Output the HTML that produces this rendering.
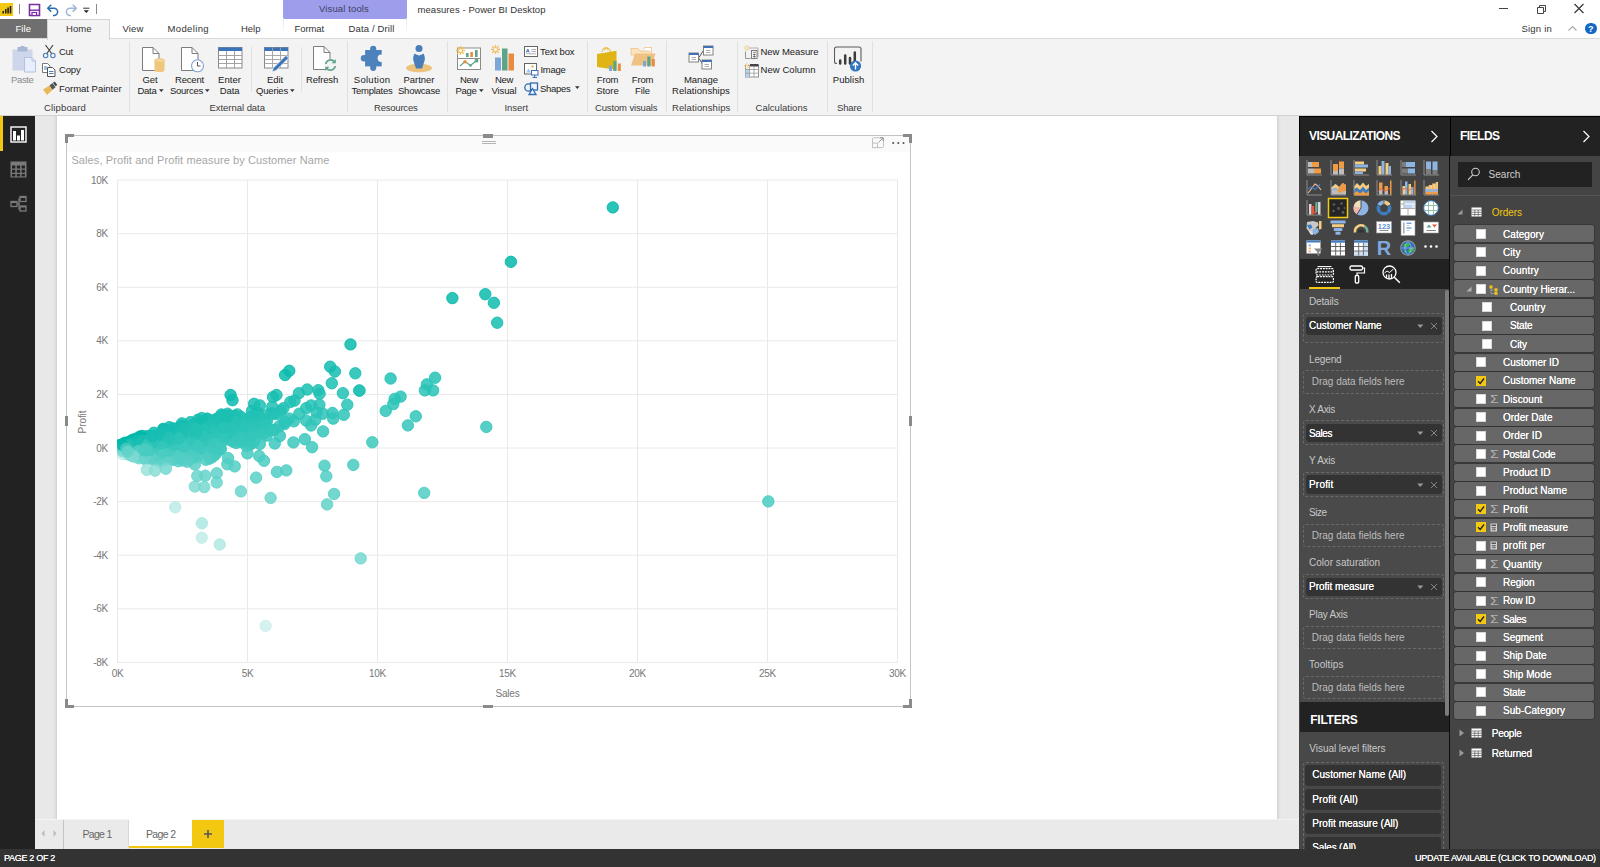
<!DOCTYPE html>
<html><head><meta charset="utf-8"><title>measures - Power BI Desktop</title>
<style>
html,body{margin:0;padding:0;}
body{width:1600px;height:867px;overflow:hidden;position:relative;background:#fff;font-family:"Liberation Sans",sans-serif;}
.t{position:absolute;white-space:nowrap;}
.b{position:absolute;box-sizing:border-box;}
</style></head>
<body>
<!-- chrome -->
<div class="b" style="left:0px;top:0px;width:1600px;height:39px;background:#ffffff;"></div>
<div class="b" style="left:0px;top:38px;width:1600px;height:78px;background:#f3f3f3;border-top:1px solid #dadada;border-bottom:1px solid #d2d2d2;"></div>
<div class="b" style="left:0px;top:3px;width:13px;height:13px;background:#f2c811;"></div>
<svg class="b" style="left:0px;top:3px;" width="13" height="13" viewBox="0 0 13 13"><rect x="2.5" y="8" width="1.5" height="2.5" fill="#222"/><rect x="5" y="6" width="1.5" height="4.5" fill="#222"/><rect x="7.3" y="4.5" width="1.6" height="6" fill="#222"/><rect x="9.7" y="3" width="1.6" height="7.5" fill="#222"/></svg>
<div class="b" style="left:19px;top:4px;width:1px;height:9.5px;background:#8a8a8a;"></div>
<svg class="b" style="left:28px;top:3px;" width="14" height="14" viewBox="0 0 14 14"><path d="M1.5 1.5h10v11h-10z" fill="none" stroke="#7a2da0" stroke-width="1.6"/><path d="M1.5 7.2h10" stroke="#7a2da0" stroke-width="1.4"/><rect x="4" y="9.5" width="4.6" height="3" fill="#fff" stroke="#7a2da0" stroke-width="1.2"/></svg>
<svg class="b" style="left:46px;top:3px;" width="14" height="14" viewBox="0 0 14 14"><path d="M2 5.2h6a3.6 3.6 0 0 1 0 7.2h-1" fill="none" stroke="#2b6cb3" stroke-width="1.5"/><path d="M5.2 1.8L1.8 5.2l3.4 3.4" fill="none" stroke="#2b6cb3" stroke-width="1.5"/></svg>
<svg class="b" style="left:64px;top:3px;" width="14" height="14" viewBox="0 0 14 14"><path d="M12 5.2h-6a3.6 3.6 0 0 0 0 7.2h1" fill="none" stroke="#9db5d6" stroke-width="1.5"/><path d="M8.8 1.8l3.4 3.4-3.4 3.4" fill="none" stroke="#9db5d6" stroke-width="1.5"/></svg>
<svg class="b" style="left:82px;top:6px;" width="9" height="9" viewBox="0 0 9 9"><path d="M1.2 2.2h6.2" stroke="#333" stroke-width="1"/><path d="M1.7 4.2h5.2l-2.6 2.8z" fill="#222"/></svg>
<div class="b" style="left:96px;top:4px;width:1px;height:9.5px;background:#8a8a8a;"></div>
<div class="b" style="left:0px;top:19px;width:47px;height:19px;background:#6f6f6f;"></div>
<div class="t" style="left:15.5px;top:22.0px;font-size:9.5px;line-height:13.5px;color:#fff;letter-spacing:0.05px;">File</div>
<div class="b" style="left:46.5px;top:19px;width:63.5px;height:21px;background:#f3f3f3;border:1px solid #d4d4d4;border-bottom:none;box-sizing:border-box;"></div>
<div class="t" style="left:66.0px;top:22.0px;font-size:9.5px;line-height:13.5px;color:#333;letter-spacing:0.04px;">Home</div>
<div class="t" style="left:122.5px;top:22.0px;font-size:9.5px;line-height:13.5px;color:#333;letter-spacing:0.15px;">View</div>
<div class="t" style="left:167.5px;top:22.0px;font-size:9.5px;line-height:13.5px;color:#333;letter-spacing:0.37px;">Modeling</div>
<div class="t" style="left:241.0px;top:22.0px;font-size:9.5px;line-height:13.5px;color:#333;letter-spacing:-0.01px;">Help</div>
<div class="b" style="left:283px;top:0px;width:123.5px;height:18.5px;background:#9d9deb;"></div>
<div class="b" style="left:283px;top:18px;width:1px;height:16px;background:linear-gradient(#e2e2e2,#fff);"></div>
<div class="b" style="left:406px;top:18px;width:1px;height:16px;background:linear-gradient(#e2e2e2,#fff);"></div>
<div class="t" style="left:319.0px;top:2.0px;font-size:9.5px;line-height:13.5px;color:#3e3e63;letter-spacing:0.13px;">Visual tools</div>
<div class="t" style="left:294.5px;top:22.0px;font-size:9.5px;line-height:13.5px;color:#333;letter-spacing:-0.10px;">Format</div>
<div class="t" style="left:348.5px;top:22.0px;font-size:9.5px;line-height:13.5px;color:#333;letter-spacing:0.14px;">Data / Drill</div>
<div class="t" style="left:417.5px;top:3.0px;font-size:9.5px;line-height:13.5px;color:#333;letter-spacing:0.07px;">measures - Power BI Desktop</div>
<svg class="b" style="left:1497px;top:2px;" width="100" height="14" viewBox="0 0 100 14"><path d="M2 6.5h9" stroke="#444" stroke-width="1"/><path d="M40.5 5.5h6v6h-6z M42.5 5.5v-2h6v6h-2" fill="none" stroke="#444" stroke-width="1"/><path d="M77.5 2l9 9m0-9l-9 9" stroke="#333" stroke-width="1.1"/></svg>
<div class="t" style="left:1521.5px;top:22.0px;font-size:9.5px;line-height:13.5px;color:#333;letter-spacing:0.21px;">Sign in</div>
<svg class="b" style="left:1567px;top:24px;" width="12" height="9" viewBox="0 0 12 9"><path d="M1.5 6.5l4-4 4 4" fill="none" stroke="#aaa" stroke-width="1.1"/></svg>
<div class="b" style="left:1585px;top:22.5px;width:11.5px;height:11.5px;background:#1268c4;border-radius:50%;"></div>
<div class="t" style="left:1588.0px;top:23.0px;font-size:9px;line-height:13px;color:#fff;font-weight:bold;">?</div>
<!-- ribbon -->
<svg class="b" style="left:12px;top:46px;" width="26" height="28" viewBox="0 0 26 28"><rect x="0.5" y="3.5" width="20" height="21" fill="#cdd6ea"/><rect x="5.5" y="1" width="10" height="4.5" fill="#a9b7d6"/><rect x="8.5" y="0" width="4" height="2.5" fill="#a9b7d6"/><path d="M12.5 11.5h7.5l3.5 3.5v11h-11z" fill="#e8eefb" stroke="#b4c3e0"/><path d="M20 11.5v3.5h3.5" fill="none" stroke="#b4c3e0"/></svg>
<div class="t" style="left:11.0px;top:73.0px;font-size:9.5px;line-height:13.5px;color:#8a8a8a;letter-spacing:-0.36px;">Paste</div>
<svg class="b" style="left:42px;top:44px;" width="15" height="15" viewBox="0 0 15 15"><path d="M3.5 1l6.5 9M11 1l-6.5 9" stroke="#444" stroke-width="1.2" fill="none"/><circle cx="3.6" cy="11.5" r="2.2" fill="none" stroke="#4a7ebb" stroke-width="1.1"/><circle cx="10.9" cy="11.5" r="2.2" fill="none" stroke="#4a7ebb" stroke-width="1.1"/></svg>
<div class="t" style="left:59.0px;top:45.0px;font-size:9.5px;line-height:13.5px;color:#222;letter-spacing:-0.26px;">Cut</div>
<svg class="b" style="left:42px;top:63px;" width="15" height="15" viewBox="0 0 15 15"><path d="M0.5 0.5h5l2.5 2.5v6.5h-7.5z" fill="#fff" stroke="#777"/><path d="M2 4h3M2 6h3" stroke="#4a7ebb"/><path d="M5.5 4.5h5l2.5 2.5v6.500h-7.5z" fill="#fff" stroke="#555"/><path d="M7 8.5h4.500M7 10.500h4.500" stroke="#4a7ebb"/></svg>
<div class="t" style="left:59.0px;top:63.0px;font-size:9.5px;line-height:13.5px;color:#222;letter-spacing:-0.17px;">Copy</div>
<svg class="b" style="left:42px;top:81px;" width="16" height="15" viewBox="0 0 16 15"><path d="M1 8.500l6.500-4 3 4.500-5.500 5z" fill="#e8b85a"/><path d="M7.500 4.500l3-2.500 3 4.200-3 2.600z" fill="#555"/><path d="M11 1.800l1.800-1.300 2.500 3.500-1.800 1.300z" fill="#444"/></svg>
<div class="t" style="left:59.0px;top:82.0px;font-size:9.5px;line-height:13.5px;color:#222;letter-spacing:-0.02px;">Format Painter</div>
<div class="t" style="left:44.0px;top:101.0px;font-size:9.5px;line-height:13.5px;color:#3a3a3a;letter-spacing:0.15px;">Clipboard</div>
<div class="b" style="left:129px;top:41px;width:1px;height:71px;background:#e0e0e0;"></div>
<svg class="b" style="left:141.5px;top:46.5px;" width="24" height="26" viewBox="0 0 24 26"><path d="M0.5 0.5h10.5l6 6v17h-16.5z" fill="#fff" stroke="#7d7d7d"/><path d="M11 0.5v6h6" fill="none" stroke="#7d7d7d"/><path d="M12.500 13.500v9.500a5 2 0 0 0 10 0v-9.500z" fill="#eec67c"/><ellipse cx="17.500" cy="13.500" rx="5" ry="2" fill="#f3d59a" stroke="#e9bd68" stroke-width="0.6"/></svg>
<div class="t" style="left:142.5px;top:73.0px;font-size:9.5px;line-height:13.5px;color:#222;letter-spacing:-0.10px;">Get</div><div class="t" style="left:137.5px;top:84.0px;font-size:9.5px;line-height:13.5px;color:#222;letter-spacing:-0.27px;">Data</div><svg class="b" style="left:158.5px;top:88.6px;" width="5" height="4" viewBox="0 0 5 4"><path d="M0 0.3h4.6l-2.3 2.6z" fill="#333"/></svg>
<svg class="b" style="left:181px;top:46.5px;" width="24" height="26" viewBox="0 0 24 26"><path d="M0.5 0.5h10.5l6 6v17h-16.5z" fill="#fff" stroke="#7d7d7d"/><path d="M11 0.5v6h6" fill="none" stroke="#7d7d7d"/><circle cx="16.500" cy="18.800" r="6" fill="#fff" stroke="#7fa3d6" stroke-width="1.1"/><path d="M16.500 15v4h3" fill="none" stroke="#555" stroke-width="1"/></svg>
<div class="t" style="left:175.0px;top:73.0px;font-size:9.5px;line-height:13.5px;color:#222;letter-spacing:-0.18px;">Recent</div><div class="t" style="left:170.0px;top:84.0px;font-size:9.5px;line-height:13.5px;color:#222;letter-spacing:-0.26px;">Sources</div><svg class="b" style="left:205.0px;top:88.6px;" width="5" height="4" viewBox="0 0 5 4"><path d="M0 0.3h4.6l-2.3 2.6z" fill="#333"/></svg>
<svg class="b" style="left:218px;top:47px;" width="25" height="22" viewBox="0 0 25 22"><rect x="0.5" y="0.5" width="23.500" height="20.500" fill="#fff" stroke="#8a8a8a"/><rect x="0.5" y="0.5" width="23.500" height="3.500" fill="#3b73b9"/><path d="M0.5 8.500h23.500M0.5 12.500h23.500M0.5 16.500h23.500M8.500 4v17M16.500 4v17" stroke="#9a9a9a" stroke-width="0.9"/></svg>
<div class="t" style="left:218.0px;top:73.0px;font-size:9.5px;line-height:13.5px;color:#222;letter-spacing:0.06px;">Enter</div><div class="t" style="left:219.8px;top:84.0px;font-size:9.5px;line-height:13.5px;color:#222;letter-spacing:-0.14px;">Data</div>
<div class="b" style="left:251px;top:47px;width:1px;height:45px;background:#e0e0e0;"></div>
<svg class="b" style="left:264px;top:47px;" width="26" height="26" viewBox="0 0 26 26"><rect x="0.5" y="0.5" width="23.500" height="20.500" fill="#fff" stroke="#8a8a8a"/><rect x="0.5" y="0.5" width="23.500" height="3.500" fill="#3b73b9"/><path d="M0.5 8.500h23.500M0.5 12.500h23.500M0.5 16.500h23.500M8.500 0.500v20.500M16.500 0.500v20.500" stroke="#a0a0a0" stroke-width="0.9"/><path d="M8.200 24.800l1.200-3.800 12.500-12.500 2.600 2.600-12.500 12.500z" fill="#3b73b9" stroke="#f3f3f3" stroke-width="0.7"/></svg>
<div class="t" style="left:267.0px;top:73.0px;font-size:9.5px;line-height:13.5px;color:#222;letter-spacing:-0.09px;">Edit</div><div class="t" style="left:256.0px;top:84.0px;font-size:9.5px;line-height:13.5px;color:#222;letter-spacing:-0.18px;">Queries</div><svg class="b" style="left:290.0px;top:88.6px;" width="5" height="4" viewBox="0 0 5 4"><path d="M0 0.3h4.6l-2.3 2.6z" fill="#333"/></svg>
<div class="b" style="left:301px;top:47px;width:1px;height:45px;background:#e0e0e0;"></div>
<svg class="b" style="left:313px;top:46px;" width="25" height="26" viewBox="0 0 25 26"><path d="M0.5 0.5h10.5l6 6v17h-16.5z" fill="#fff" stroke="#7d7d7d"/><path d="M11 0.5v6h6" fill="none" stroke="#7d7d7d"/><circle cx="17.500" cy="19" r="6.200" fill="#f3f3f3"/><path d="M12.800 18a4.800 4.800 0 0 1 8.600-2.200" fill="none" stroke="#5fa388" stroke-width="1.700"/><path d="M22.200 20a4.800 4.800 0 0 1-8.600 2.200" fill="none" stroke="#5fa388" stroke-width="1.700"/><path d="M22.800 13v4.200h-4.200z" fill="#5fa388"/><path d="M12.200 25v-4.200h4.200z" fill="#5fa388"/></svg>
<div class="t" style="left:306.0px;top:73.0px;font-size:9.5px;line-height:13.5px;color:#222;letter-spacing:-0.18px;">Refresh</div>
<div class="t" style="left:209.5px;top:101.0px;font-size:9.5px;line-height:13.5px;color:#3a3a3a;letter-spacing:-0.04px;">External data</div>
<div class="b" style="left:346.5px;top:41px;width:1px;height:71px;background:#e0e0e0;"></div>
<svg class="b" style="left:360px;top:45px;" width="24" height="27" viewBox="0 0 24 27"><g fill="#4d82bc"><rect x="5.100" y="5" width="16.600" height="16.400"/><circle cx="13.200" cy="3.900" r="3.100"/><circle cx="13.200" cy="22.800" r="3.100"/><circle cx="4" cy="13.300" r="3.200"/></g><circle cx="21.300" cy="13.300" r="3.700" fill="#f3f3f3"/></svg>
<div class="t" style="left:353.8px;top:73.0px;font-size:9.5px;line-height:13.5px;color:#222;letter-spacing:0.27px;">Solution</div><div class="t" style="left:351.5px;top:84.0px;font-size:9.5px;line-height:13.5px;color:#222;letter-spacing:-0.26px;">Templates</div>
<svg class="b" style="left:405px;top:44px;" width="29" height="29" viewBox="0 0 29 29"><ellipse cx="14" cy="24" rx="13" ry="4.300" fill="#edc27a"/><circle cx="14" cy="4.500" r="3.500" fill="#4a7ebb"/><path d="M9.500 9.500q4.500 3.500 9 0q2.500 5 0.500 9l-2 6h-6l-2-6q-2-4 0.500-9z" fill="#4a7ebb"/><path d="M12.300 9l1.700 3 1.700-3z" fill="#f3f3f3"/></svg>
<div class="t" style="left:403.5px;top:73.0px;font-size:9.5px;line-height:13.5px;color:#222;letter-spacing:-0.02px;">Partner</div><div class="t" style="left:398.0px;top:84.0px;font-size:9.5px;line-height:13.5px;color:#222;letter-spacing:-0.23px;">Showcase</div>
<div class="t" style="left:374.0px;top:101.0px;font-size:9.5px;line-height:13.5px;color:#3a3a3a;letter-spacing:-0.21px;">Resources</div>
<div class="b" style="left:447px;top:41px;width:1px;height:71px;background:#e0e0e0;"></div>
<svg class="b" style="left:456px;top:45.5px;" width="26" height="25" viewBox="0 0 26 25"><rect x="1.500" y="2" width="23" height="21.500" fill="#fff" stroke="#8c8c8c"/><path d="M1.500 12.500h23" stroke="#8c8c8c"/><rect x="10" y="7" width="2.600" height="4" fill="#5fa388"/><rect x="14.300" y="6" width="2.600" height="5" fill="#e98b3f"/><rect x="19" y="4" width="2.600" height="7" fill="#5fa388"/><path d="M4 20l5-4.500 5.500 4 6-5" fill="none" stroke="#5fa388" stroke-width="1.100"/><circle cx="9" cy="15.700" r="1.700" fill="#e98b3f"/><circle cx="20.500" cy="14.700" r="1.900" fill="#5fa388"/><circle cx="14.500" cy="19.500" r="1.300" fill="#5fa388"/><g stroke="#efc162" stroke-width="1.350"><path d="M4.500 0v9M0 4.500h9M1.300 1.300l6.400 6.400M7.700 1.300l-6.400 6.400"/></g><circle cx="4.500" cy="4.500" r="1.500" fill="#fbfbfb"/></svg>
<div class="t" style="left:460.0px;top:73.0px;font-size:9.5px;line-height:13.5px;color:#222;letter-spacing:-0.33px;">New</div><div class="t" style="left:455.5px;top:84.0px;font-size:9.5px;line-height:13.5px;color:#222;letter-spacing:-0.30px;">Page</div><svg class="b" style="left:478.5px;top:88.6px;" width="5" height="4" viewBox="0 0 5 4"><path d="M0 0.3h4.6l-2.3 2.6z" fill="#333"/></svg>
<svg class="b" style="left:491px;top:44.5px;" width="25" height="26" viewBox="0 0 25 26"><rect x="4" y="12.500" width="6" height="13" fill="#7ea6d8"/><rect x="11" y="3.500" width="5.500" height="22" fill="#5fa388"/><rect x="17.500" y="8.500" width="5.500" height="17" fill="#e98b3f"/><g stroke="#efc162" stroke-width="1.350"><path d="M4.500 0v9M0 4.500h9M1.300 1.300l6.400 6.400M7.700 1.300l-6.400 6.400"/></g><circle cx="4.500" cy="4.500" r="1.500" fill="#fbfbfb"/></svg>
<div class="t" style="left:495.0px;top:73.0px;font-size:9.5px;line-height:13.5px;color:#222;letter-spacing:-0.33px;">New</div><div class="t" style="left:491.5px;top:84.0px;font-size:9.5px;line-height:13.5px;color:#222;letter-spacing:-0.12px;">Visual</div>
<svg class="b" style="left:523.5px;top:45.5px;" width="15" height="12" viewBox="0 0 15 12"><rect x="0.5" y="0.500" width="13" height="10" fill="#fff" stroke="#666"/><path d="M7.500 3.500h4.500M7.500 5.500h4.500M2.500 7.800h9.500" stroke="#999" stroke-width="0.8"/><path d="M2.300 6.500l1.500-3.500 1.500 3.500M2.800 5.300h2" fill="none" stroke="#3b73b9" stroke-width="0.9"/></svg>
<div class="t" style="left:540.0px;top:45.0px;font-size:9.5px;line-height:13.5px;color:#222;letter-spacing:-0.11px;">Text box</div>
<svg class="b" style="left:523.5px;top:62.5px;" width="16" height="16" viewBox="0 0 16 16"><rect x="0.5" y="0.500" width="12" height="10.500" fill="#fff" stroke="#666"/><circle cx="8.500" cy="3.500" r="1.200" fill="#e8b460"/><path d="M2 9.500l2.500-4 2.500 4z" fill="#a9c3e6"/><rect x="7.500" y="7.500" width="6.500" height="4.500" fill="#fff" stroke="#3b73b9"/><path d="M8.500 14.500h4.500M10.700 12v2.500" stroke="#3b73b9"/></svg>
<div class="t" style="left:540.5px;top:63.0px;font-size:9.5px;line-height:13.5px;color:#222;letter-spacing:-0.28px;">Image</div>
<svg class="b" style="left:523.5px;top:82px;" width="16" height="14" viewBox="0 0 16 14"><circle cx="4.500" cy="5.500" r="3.700" fill="none" stroke="#2e6db5" stroke-width="1.300"/><rect x="6.500" y="1" width="7" height="7" fill="#f3f3f3" stroke="#2e6db5" stroke-width="1.300"/><path d="M5 12.500l3.500-6 3.500 6z" fill="#f3f3f3" stroke="#2e6db5" stroke-width="1.300"/></svg>
<div class="t" style="left:540.0px;top:82.0px;font-size:9.5px;line-height:13.5px;color:#222;letter-spacing:-0.29px;">Shapes</div>
<svg class="b" style="left:574.5px;top:86px;" width="5" height="4" viewBox="0 0 5 4"><path d="M0 0.300h4.600l-2.300 2.600z" fill="#333"/></svg>
<div class="t" style="left:504.5px;top:101.0px;font-size:9.5px;line-height:13.5px;color:#3a3a3a;letter-spacing:-0.04px;">Insert</div>
<div class="b" style="left:587px;top:41px;width:1px;height:71px;background:#e0e0e0;"></div>
<svg class="b" style="left:596px;top:44px;" width="27" height="28" viewBox="0 0 27 28"><path d="M6 8a4.200 4.200 0 0 1 8.400 0" fill="none" stroke="#e3b92c" stroke-width="1.100"/><path d="M8.500 6.500a1.800 2.200 0 0 1 3.600 0" fill="none" stroke="#e3b92c" stroke-width="0.900"/><path d="M1 10l19.500-3.300v19l-19.500-2.700z" fill="#e0b414"/><g transform="translate(13,17)"><rect x="0" y="4.500" width="3" height="5.500" fill="#7ea6d8"/><rect x="4.300" y="0" width="3.200" height="10" fill="#5fa388"/><rect x="8.800" y="2.500" width="3" height="7.500" fill="#e98b3f"/></g></svg>
<div class="t" style="left:596.8px;top:73.0px;font-size:9.5px;line-height:13.5px;color:#222;letter-spacing:-0.17px;">From</div><div class="t" style="left:596.2px;top:84.0px;font-size:9.5px;line-height:13.5px;color:#222;letter-spacing:-0.04px;">Store</div>
<svg class="b" style="left:630px;top:47px;" width="28" height="22" viewBox="0 0 28 22"><path d="M1 1.500h7l2 2.500h11.500v4h-20.500z" fill="#fbe3bd" stroke="#efc283" stroke-width="0.8"/><path d="M13 2l2-1.500h6.500v4" fill="#fff" stroke="#efc283" stroke-width="0.8"/><path d="M1 18.500l4-12h20.500l-3.500 12z" fill="#efc283"/><g transform="translate(13,9.500)"><rect x="0" y="4.500" width="3" height="5.500" fill="#7ea6d8"/><rect x="4.300" y="0" width="3.200" height="10" fill="#5fa388"/><rect x="8.800" y="2.500" width="3" height="7.500" fill="#e98b3f"/></g></svg>
<div class="t" style="left:631.8px;top:73.0px;font-size:9.5px;line-height:13.5px;color:#222;letter-spacing:-0.17px;">From</div><div class="t" style="left:635.0px;top:84.0px;font-size:9.5px;line-height:13.5px;color:#222;letter-spacing:-0.08px;">File</div>
<div class="t" style="left:595.0px;top:101.0px;font-size:9.5px;line-height:13.5px;color:#3a3a3a;letter-spacing:-0.14px;">Custom visuals</div>
<div class="b" style="left:666px;top:41px;width:1px;height:71px;background:#e0e0e0;"></div>
<svg class="b" style="left:688px;top:45px;" width="27" height="26" viewBox="0 0 27 26"><path d="M11 12.500l4-6.500M11 13.500l3.500 5.500" stroke="#555" stroke-width="1"/><rect x="1" y="8" width="9.500" height="9" fill="#fff" stroke="#777" stroke-width="0.9"/><rect x="1" y="8" width="9.500" height="2" fill="#3b73b9"/><path d="M3.5 12.5h4.500M3.5 14.5h4.500" stroke="#999" stroke-width="0.8"/><rect x="15.5" y="1" width="9.500" height="9" fill="#fff" stroke="#777" stroke-width="0.9"/><rect x="15.5" y="1" width="9.500" height="2" fill="#3b73b9"/><path d="M18.0 5.5h4.500M18.0 7.5h4.500" stroke="#999" stroke-width="0.8"/><rect x="14" y="15" width="9.500" height="9" fill="#fff" stroke="#777" stroke-width="0.9"/><rect x="14" y="15" width="9.500" height="2" fill="#3b73b9"/><path d="M16.5 19.5h4.500M16.5 21.5h4.500" stroke="#999" stroke-width="0.8"/></svg>
<div class="t" style="left:684.0px;top:73.0px;font-size:9.5px;line-height:13.5px;color:#222;letter-spacing:-0.06px;">Manage</div><div class="t" style="left:672.0px;top:84.0px;font-size:9.5px;line-height:13.5px;color:#222;letter-spacing:0.07px;">Relationships</div>
<div class="t" style="left:672.0px;top:101.0px;font-size:9.5px;line-height:13.5px;color:#3a3a3a;letter-spacing:0.11px;">Relationships</div>
<div class="b" style="left:737px;top:41px;width:1px;height:71px;background:#e0e0e0;"></div>
<svg class="b" style="left:743.5px;top:44.5px;" width="16" height="15" viewBox="0 0 16 15"><path d="M1.500 6.500v7h5" fill="none" stroke="#8a8a8a" stroke-width="0.9"/><path d="M5 3h9v9" fill="none" stroke="#aaa" stroke-width="0.9"/><rect x="7.500" y="5.500" width="5.500" height="8" fill="#fff" stroke="#707070" stroke-width="0.9"/><path d="M8.800 7.300h3M8.800 9.500h3M8.800 11.500h3M10.300 8.500v4.500" stroke="#666" stroke-width="0.8"/><g stroke="#f0c778" stroke-width="0.750"><path d="M3 0v6M0 3h6M0.900 0.900l4.200 4.200M5.100 0.900l-4.200 4.200"/></g><circle cx="3" cy="3" r="0.900" fill="#f7f1e4"/></svg>
<div class="t" style="left:760.5px;top:45.0px;font-size:9.5px;line-height:13.5px;color:#222;letter-spacing:-0.06px;">New Measure</div>
<svg class="b" style="left:743.5px;top:62.5px;" width="16" height="15" viewBox="0 0 16 15"><rect x="1.500" y="2.500" width="13" height="11.500" fill="#fff" stroke="#888" stroke-width="0.9"/><rect x="6" y="1" width="8.500" height="2.500" fill="#444"/><rect x="1.500" y="6" width="3.800" height="8" fill="#b8d0ee"/><path d="M1.500 6.500h13M1.500 10.200h13M5.500 3v11M10 3v11" stroke="#999" stroke-width="0.8"/><g stroke="#f0c778" stroke-width="0.750"><path d="M3 0v6M0 3h6M0.900 0.900l4.200 4.200M5.100 0.900l-4.200 4.200"/></g><circle cx="3" cy="3" r="0.900" fill="#f7f1e4"/></svg>
<div class="t" style="left:760.5px;top:63.0px;font-size:9.5px;line-height:13.5px;color:#222;letter-spacing:0.06px;">New Column</div>
<div class="t" style="left:755.5px;top:101.0px;font-size:9.5px;line-height:13.5px;color:#3a3a3a;letter-spacing:0.02px;">Calculations</div>
<div class="b" style="left:827px;top:41px;width:1px;height:71px;background:#e0e0e0;"></div>
<svg class="b" style="left:834px;top:46px;" width="30" height="27" viewBox="0 0 30 27"><path d="M3 17.500h-0.500a2 2 0 0 1-2-2v-12.500a2 2 0 0 1 2-2h22.500a2 2 0 0 1 2 2v12.500" fill="none" stroke="#5a5a5a" stroke-width="1.100"/><path d="M6.200 17.500v-3M11.200 17.500v-8M16 17.500v-5.500M20.800 17.500v-11" stroke="#3c3c3c" stroke-width="2.500" stroke-linecap="round"/><circle cx="21.500" cy="20" r="5.600" fill="#2f75c0"/><path d="M21.500 23.500v-6.500M18.800 19.500l2.700-2.700 2.700 2.700" fill="none" stroke="#fff" stroke-width="1.400"/></svg>
<div class="t" style="left:832.8px;top:73.0px;font-size:9.5px;line-height:13.5px;color:#222;letter-spacing:0.05px;">Publish</div>
<div class="t" style="left:837.0px;top:101.0px;font-size:9.5px;line-height:13.5px;color:#3a3a3a;letter-spacing:-0.17px;">Share</div>
<div class="b" style="left:871.5px;top:41px;width:1px;height:71px;background:#e0e0e0;"></div>
<!-- canvas -->
<div class="b" style="left:35px;top:116px;width:1264px;height:703px;background:#e8e8e8;overflow:hidden;"><div class="b" style="left:22px;top:-10px;width:1220px;height:723px;background:#ffffff;box-shadow:0 0 4px rgba(0,0,0,0.20);"></div></div>
<div class="b" style="left:0px;top:116px;width:35px;height:733px;background:#222222;"></div>
<div class="b" style="left:0px;top:116px;width:3px;height:35px;background:#f2c811;"></div>
<svg class="b" style="left:10px;top:126px;" width="17" height="17" viewBox="0 0 17 17"><rect x="1" y="1" width="15" height="15" fill="none" stroke="#fff" stroke-width="1.400"/><rect x="3" y="5" width="3" height="9.500" fill="#fff"/><rect x="7" y="9.500" width="3" height="5" fill="#fff"/><rect x="11" y="4" width="3" height="10.500" fill="#fff"/></svg>
<svg class="b" style="left:10px;top:161px;" width="17" height="17" viewBox="0 0 17 17"><rect x="0.500" y="0.500" width="16" height="16" fill="#7a7a7a"/><g fill="#222"><rect x="2" y="4.500" width="3.300" height="3"/><rect x="6.800" y="4.500" width="3.300" height="3"/><rect x="11.600" y="4.500" width="3.300" height="3"/><rect x="2" y="8.800" width="3.300" height="3"/><rect x="6.800" y="8.800" width="3.300" height="3"/><rect x="11.600" y="8.800" width="3.300" height="3"/><rect x="2" y="13" width="3.300" height="2.400"/><rect x="6.800" y="13" width="3.300" height="2.400"/><rect x="11.600" y="13" width="3.300" height="2.400"/></g></svg>
<svg class="b" style="left:10px;top:195px;" width="17" height="18" viewBox="0 0 17 18"><g fill="none" stroke="#7a7a7a" stroke-width="1.300"><rect x="1" y="6.500" width="6" height="5"/><rect x="10" y="1.500" width="6" height="5"/><rect x="10" y="11" width="6" height="5"/><path d="M7 9h2v-5h1M9 9v5h1"/></g><path d="M1 6.500h6v1.600h-6zM10 1.500h6v1.600h-6zM10 11h6v1.600h-6z" fill="#7a7a7a"/></svg>
<div class="b" style="left:35px;top:819px;width:1264px;height:29.5px;background:#eaeaea;border-top:1px solid #f4f4f4;"></div>
<svg class="b" style="left:39px;top:828px;" width="20" height="11" viewBox="0 0 20 11"><path d="M5.500 2l-3 3.500 3 3.500z" fill="#bcbcbc"/><path d="M14.500 2l3 3.500-3 3.500z" fill="#bcbcbc"/></svg>
<div class="b" style="left:63px;top:820px;width:1px;height:28.5px;background:#c4c4c4;"></div>
<div class="b" style="left:128px;top:819.5px;width:1px;height:29px;background:#d8d8d8;"></div>
<div class="t" style="left:82.5px;top:827.0px;font-size:10.5px;line-height:14.5px;color:#666;letter-spacing:-0.71px;">Page 1</div>
<div class="b" style="left:128.5px;top:819px;width:63.5px;height:29px;background:#ffffff;border-bottom:2px solid #f2c811;"></div>
<div class="t" style="left:146.0px;top:827.0px;font-size:10.5px;line-height:14.5px;color:#666;letter-spacing:-0.63px;">Page 2</div>
<div class="b" style="left:192px;top:819.5px;width:32px;height:28.5px;background:#f2c811;"></div>
<svg class="b" style="left:203px;top:828.5px;" width="10" height="10" viewBox="0 0 10 10"><path d="M5 1v8M1 5h8" stroke="#555" stroke-width="1.600"/></svg>
<!-- chart -->
<div class="b" style="left:66px;top:135px;width:845px;height:572px;background:#ffffff;border:1px solid #c4c4c4;"></div>
<div class="b" style="left:67px;top:136px;width:843px;height:15.7px;background:#fafafa;"></div>
<div class="b" style="left:65px;top:134px;width:8.5px;height:3px;background:#8a8a8a;"></div>
<div class="b" style="left:65px;top:134px;width:3px;height:8.5px;background:#8a8a8a;"></div>
<div class="b" style="left:903px;top:134px;width:8.5px;height:3px;background:#8a8a8a;"></div>
<div class="b" style="left:908.5px;top:134px;width:3px;height:8.5px;background:#8a8a8a;"></div>
<div class="b" style="left:65px;top:704.5px;width:8.5px;height:3px;background:#8a8a8a;"></div>
<div class="b" style="left:65px;top:699px;width:3px;height:8.5px;background:#8a8a8a;"></div>
<div class="b" style="left:903px;top:704.5px;width:8.5px;height:3px;background:#8a8a8a;"></div>
<div class="b" style="left:908.5px;top:699px;width:3px;height:8.5px;background:#8a8a8a;"></div>
<div class="b" style="left:483px;top:134px;width:10px;height:3.5px;background:#8a8a8a;"></div>
<div class="b" style="left:483px;top:704.5px;width:10px;height:3.5px;background:#8a8a8a;"></div>
<div class="b" style="left:65px;top:416px;width:3px;height:10px;background:#8a8a8a;"></div>
<div class="b" style="left:908.8px;top:416px;width:3px;height:10px;background:#8a8a8a;"></div>
<div class="b" style="left:482px;top:141px;width:14px;height:1px;background:#b4b4b4;"></div>
<div class="b" style="left:482px;top:143.2px;width:14px;height:1px;background:#b4b4b4;"></div>
<svg class="b" style="left:872px;top:137px;" width="13" height="12" viewBox="0 0 13 12"><rect x="0.500" y="0.800" width="11" height="9.800" rx="1" fill="none" stroke="#c2c2c2" stroke-width="1"/><rect x="0.500" y="6.200" width="5" height="4.400" fill="#fafafa" stroke="#c2c2c2" stroke-width="1"/><path d="M6.500 5.500l4.300-4.300" stroke="#8a8a8a" stroke-width="0.900"/><path d="M8 0.800h3.200v3.200" fill="none" stroke="#8a8a8a" stroke-width="0.900"/></svg>
<svg class="b" style="left:891px;top:140.5px;" width="15" height="4" viewBox="0 0 15 4"><circle cx="2.200" cy="2" r="1.050" fill="#555"/><circle cx="7.300" cy="2" r="1.050" fill="#555"/><circle cx="12.500" cy="2" r="1.050" fill="#555"/></svg>
<div class="t" style="left:71.4px;top:153.0px;font-size:11px;line-height:15px;color:#a6a6a6;letter-spacing:0.10px;">Sales, Profit and Profit measure by Customer Name</div>
<svg class="b" style="left:0;top:0" width="920" height="720" viewBox="0 0 920 720"><path d="M117.5 180.10H897.5" stroke="#e9e9e9" stroke-width="1"/><path d="M117.5 233.69H897.5" stroke="#e9e9e9" stroke-width="1"/><path d="M117.5 287.28H897.5" stroke="#e9e9e9" stroke-width="1"/><path d="M117.5 340.87H897.5" stroke="#e9e9e9" stroke-width="1"/><path d="M117.5 394.46H897.5" stroke="#e9e9e9" stroke-width="1"/><path d="M117.5 448.04H897.5" stroke="#e9e9e9" stroke-width="1"/><path d="M117.5 501.63H897.5" stroke="#e9e9e9" stroke-width="1"/><path d="M117.5 555.22H897.5" stroke="#e9e9e9" stroke-width="1"/><path d="M117.5 608.81H897.5" stroke="#e9e9e9" stroke-width="1"/><path d="M117.5 662.40H897.5" stroke="#e9e9e9" stroke-width="1"/><path d="M117.50 180.1V662.4" stroke="#e9e9e9" stroke-width="1"/><path d="M247.50 180.1V662.4" stroke="#e9e9e9" stroke-width="1"/><path d="M377.50 180.1V662.4" stroke="#e9e9e9" stroke-width="1"/><path d="M507.50 180.1V662.4" stroke="#e9e9e9" stroke-width="1"/><path d="M637.50 180.1V662.4" stroke="#e9e9e9" stroke-width="1"/><path d="M767.50 180.1V662.4" stroke="#e9e9e9" stroke-width="1"/><path d="M897.50 180.1V662.4" stroke="#e9e9e9" stroke-width="1"/><clipPath id="pc"><rect x="117.5" y="172.1" width="788.0" height="498.29999999999995"/></clipPath><g clip-path="url(#pc)" fill-opacity="0.850" stroke-width="1" stroke-opacity="0.900"><circle cx="125.7" cy="453.4" r="5.700" fill="#8dded7" stroke="#8dded7"/><circle cx="146.3" cy="454.3" r="5.700" fill="#59d0c6" stroke="#59d0c6"/><circle cx="176.0" cy="449.6" r="5.700" fill="#42cabf" stroke="#42cabf"/><circle cx="120.4" cy="447.2" r="5.700" fill="#0abaad" stroke="#0abaad"/><circle cx="148.0" cy="439.4" r="5.700" fill="#1cbfb3" stroke="#1cbfb3"/><circle cx="155.2" cy="451.7" r="5.700" fill="#4accc2" stroke="#4accc2"/><circle cx="171.9" cy="439.1" r="5.700" fill="#2bc3b7" stroke="#2bc3b7"/><circle cx="220.4" cy="423.4" r="5.700" fill="#22c1b5" stroke="#22c1b5"/><circle cx="208.6" cy="450.7" r="5.700" fill="#43cabf" stroke="#43cabf"/><circle cx="118.5" cy="450.1" r="5.700" fill="#c8eeea" stroke="#c8eeea"/><circle cx="161.7" cy="446.0" r="5.700" fill="#39c7bc" stroke="#39c7bc"/><circle cx="132.9" cy="439.7" r="5.700" fill="#01b8aa" stroke="#01b8aa"/><circle cx="248.4" cy="418.5" r="5.700" fill="#24c1b5" stroke="#24c1b5"/><circle cx="122.9" cy="452.9" r="5.700" fill="#ace7e1" stroke="#ace7e1"/><circle cx="138.5" cy="443.4" r="5.700" fill="#22c1b5" stroke="#22c1b5"/><circle cx="211.4" cy="451.6" r="5.700" fill="#44cabf" stroke="#44cabf"/><circle cx="205.4" cy="451.4" r="5.700" fill="#44cabf" stroke="#44cabf"/><circle cx="193.1" cy="428.4" r="5.700" fill="#1fc0b4" stroke="#1fc0b4"/><circle cx="118.8" cy="446.8" r="5.700" fill="#01b8aa" stroke="#01b8aa"/><circle cx="230.6" cy="440.2" r="5.700" fill="#37c7bb" stroke="#37c7bb"/><circle cx="135.0" cy="447.4" r="5.700" fill="#39c7bc" stroke="#39c7bc"/><circle cx="235.2" cy="422.2" r="5.700" fill="#24c2b5" stroke="#24c2b5"/><circle cx="239.1" cy="428.1" r="5.700" fill="#2bc4b8" stroke="#2bc4b8"/><circle cx="117.5" cy="448.6" r="5.700" fill="#53cec4" stroke="#53cec4"/><circle cx="158.5" cy="452.2" r="5.700" fill="#4bccc2" stroke="#4bccc2"/><circle cx="159.2" cy="453.1" r="5.700" fill="#4dcdc3" stroke="#4dcdc3"/><circle cx="153.8" cy="449.9" r="5.700" fill="#45cbc0" stroke="#45cbc0"/><circle cx="249.6" cy="444.0" r="5.700" fill="#3bc8bd" stroke="#3bc8bd"/><circle cx="169.8" cy="447.6" r="5.700" fill="#3ec9be" stroke="#3ec9be"/><circle cx="173.3" cy="459.3" r="5.700" fill="#57d0c6" stroke="#57d0c6"/><circle cx="125.2" cy="453.6" r="5.700" fill="#96e1da" stroke="#96e1da"/><circle cx="151.3" cy="438.5" r="5.700" fill="#1cbfb3" stroke="#1cbfb3"/><circle cx="136.9" cy="457.1" r="5.700" fill="#77d8d0" stroke="#77d8d0"/><circle cx="153.8" cy="432.8" r="5.700" fill="#0bbbad" stroke="#0bbbad"/><circle cx="133.1" cy="442.0" r="5.700" fill="#0dbbae" stroke="#0dbbae"/><circle cx="235.9" cy="417.3" r="5.700" fill="#20c0b4" stroke="#20c0b4"/><circle cx="120.3" cy="452.4" r="5.700" fill="#cef0ec" stroke="#cef0ec"/><circle cx="198.4" cy="442.3" r="5.700" fill="#36c7bb" stroke="#36c7bb"/><circle cx="138.4" cy="452.0" r="5.700" fill="#55cfc5" stroke="#55cfc5"/><circle cx="131.2" cy="450.3" r="5.700" fill="#51cec4" stroke="#51cec4"/><circle cx="135.9" cy="444.4" r="5.700" fill="#25c2b6" stroke="#25c2b6"/><circle cx="150.1" cy="448.7" r="5.700" fill="#41c9bf" stroke="#41c9bf"/><circle cx="120.2" cy="447.9" r="5.700" fill="#29c3b7" stroke="#29c3b7"/><circle cx="134.2" cy="444.7" r="5.700" fill="#24c2b5" stroke="#24c2b5"/><circle cx="132.9" cy="450.0" r="5.700" fill="#4dcdc2" stroke="#4dcdc2"/><circle cx="128.8" cy="450.9" r="5.700" fill="#5cd1c7" stroke="#5cd1c7"/><circle cx="119.5" cy="445.9" r="5.700" fill="#01b8aa" stroke="#01b8aa"/><circle cx="187.2" cy="453.0" r="5.700" fill="#48cbc1" stroke="#48cbc1"/><circle cx="182.3" cy="451.4" r="5.700" fill="#45cbc0" stroke="#45cbc0"/><circle cx="170.1" cy="435.1" r="5.700" fill="#21c1b4" stroke="#21c1b4"/><circle cx="233.2" cy="435.0" r="5.700" fill="#31c5ba" stroke="#31c5ba"/><circle cx="229.6" cy="425.8" r="5.700" fill="#27c2b6" stroke="#27c2b6"/><circle cx="197.4" cy="448.7" r="5.700" fill="#40c9be" stroke="#40c9be"/><circle cx="184.6" cy="442.6" r="5.700" fill="#35c6bb" stroke="#35c6bb"/><circle cx="185.1" cy="434.5" r="5.700" fill="#27c2b6" stroke="#27c2b6"/><circle cx="169.4" cy="435.5" r="5.700" fill="#21c1b4" stroke="#21c1b4"/><circle cx="159.9" cy="436.1" r="5.700" fill="#1cbfb3" stroke="#1cbfb3"/><circle cx="154.3" cy="455.1" r="5.700" fill="#56cfc5" stroke="#56cfc5"/><circle cx="289.4" cy="418.6" r="5.700" fill="#2ac3b7" stroke="#2ac3b7"/><circle cx="161.5" cy="441.5" r="5.700" fill="#2cc4b8" stroke="#2cc4b8"/><circle cx="118.6" cy="445.4" r="5.700" fill="#01b8aa" stroke="#01b8aa"/><circle cx="138.8" cy="458.3" r="5.700" fill="#79d9d1" stroke="#79d9d1"/><circle cx="167.3" cy="444.8" r="5.700" fill="#37c7bb" stroke="#37c7bb"/><circle cx="119.8" cy="447.0" r="5.700" fill="#01b8aa" stroke="#01b8aa"/><circle cx="133.1" cy="449.7" r="5.700" fill="#4accc2" stroke="#4accc2"/><circle cx="134.5" cy="444.3" r="5.700" fill="#22c1b5" stroke="#22c1b5"/><circle cx="135.4" cy="454.0" r="5.700" fill="#66d4cb" stroke="#66d4cb"/><circle cx="158.7" cy="452.2" r="5.700" fill="#4bccc2" stroke="#4bccc2"/><circle cx="220.9" cy="434.8" r="5.700" fill="#30c5b9" stroke="#30c5b9"/><circle cx="138.7" cy="442.9" r="5.700" fill="#20c0b4" stroke="#20c0b4"/><circle cx="133.9" cy="451.0" r="5.700" fill="#53cfc5" stroke="#53cfc5"/><circle cx="147.4" cy="436.1" r="5.700" fill="#0dbbae" stroke="#0dbbae"/><circle cx="271.8" cy="413.3" r="5.700" fill="#24c2b5" stroke="#24c2b5"/><circle cx="242.2" cy="435.7" r="5.700" fill="#33c6ba" stroke="#33c6ba"/><circle cx="240.3" cy="442.1" r="5.700" fill="#39c7bc" stroke="#39c7bc"/><circle cx="123.4" cy="444.4" r="5.700" fill="#01b8aa" stroke="#01b8aa"/><circle cx="163.9" cy="429.2" r="5.700" fill="#0dbbae" stroke="#0dbbae"/><circle cx="223.6" cy="435.4" r="5.700" fill="#31c5b9" stroke="#31c5b9"/><circle cx="136.1" cy="438.6" r="5.700" fill="#01b8aa" stroke="#01b8aa"/><circle cx="173.0" cy="428.8" r="5.700" fill="#15bdb0" stroke="#15bdb0"/><circle cx="197.3" cy="457.0" r="5.700" fill="#4dcdc2" stroke="#4dcdc2"/><circle cx="203.0" cy="441.2" r="5.700" fill="#35c6bb" stroke="#35c6bb"/><circle cx="172.7" cy="443.9" r="5.700" fill="#36c6bb" stroke="#36c6bb"/><circle cx="137.9" cy="446.2" r="5.700" fill="#33c6ba" stroke="#33c6ba"/><circle cx="211.7" cy="420.5" r="5.700" fill="#1cbfb3" stroke="#1cbfb3"/><circle cx="140.4" cy="442.0" r="5.700" fill="#1dc0b3" stroke="#1dc0b3"/><circle cx="133.5" cy="447.0" r="5.700" fill="#35c6bb" stroke="#35c6bb"/><circle cx="188.2" cy="437.5" r="5.700" fill="#2dc4b8" stroke="#2dc4b8"/><circle cx="151.9" cy="445.9" r="5.700" fill="#37c7bb" stroke="#37c7bb"/><circle cx="137.6" cy="450.0" r="5.700" fill="#4accc1" stroke="#4accc1"/><circle cx="120.7" cy="445.5" r="5.700" fill="#01b8aa" stroke="#01b8aa"/><circle cx="130.9" cy="445.1" r="5.700" fill="#21c1b4" stroke="#21c1b4"/><circle cx="244.6" cy="422.3" r="5.700" fill="#27c2b6" stroke="#27c2b6"/><circle cx="178.6" cy="447.6" r="5.700" fill="#3ec9be" stroke="#3ec9be"/><circle cx="137.5" cy="445.9" r="5.700" fill="#30c5b9" stroke="#30c5b9"/><circle cx="123.8" cy="445.4" r="5.700" fill="#04b9ab" stroke="#04b9ab"/><circle cx="217.0" cy="423.5" r="5.700" fill="#21c1b4" stroke="#21c1b4"/><circle cx="163.3" cy="451.1" r="5.700" fill="#47cbc0" stroke="#47cbc0"/><circle cx="132.3" cy="451.3" r="5.700" fill="#58d0c6" stroke="#58d0c6"/><circle cx="136.4" cy="442.6" r="5.700" fill="#1abfb2" stroke="#1abfb2"/><circle cx="142.9" cy="456.3" r="5.700" fill="#66d4ca" stroke="#66d4ca"/><circle cx="144.2" cy="442.0" r="5.700" fill="#22c1b5" stroke="#22c1b5"/><circle cx="216.4" cy="422.7" r="5.700" fill="#20c0b4" stroke="#20c0b4"/><circle cx="162.9" cy="448.0" r="5.700" fill="#3fc9be" stroke="#3fc9be"/><circle cx="154.8" cy="455.2" r="5.700" fill="#56cfc5" stroke="#56cfc5"/><circle cx="218.8" cy="417.8" r="5.700" fill="#1bbfb2" stroke="#1bbfb2"/><circle cx="204.3" cy="435.3" r="5.700" fill="#2dc4b8" stroke="#2dc4b8"/><circle cx="131.8" cy="455.8" r="5.700" fill="#80dbd3" stroke="#80dbd3"/><circle cx="155.7" cy="445.4" r="5.700" fill="#36c6bb" stroke="#36c6bb"/><circle cx="161.7" cy="444.7" r="5.700" fill="#35c6bb" stroke="#35c6bb"/><circle cx="166.2" cy="437.5" r="5.700" fill="#24c2b5" stroke="#24c2b5"/><circle cx="127.4" cy="452.2" r="5.700" fill="#70d6ce" stroke="#70d6ce"/><circle cx="147.0" cy="444.5" r="5.700" fill="#2fc5b9" stroke="#2fc5b9"/><circle cx="260.7" cy="425.1" r="5.700" fill="#2cc4b8" stroke="#2cc4b8"/><circle cx="214.0" cy="427.7" r="5.700" fill="#25c2b6" stroke="#25c2b6"/><circle cx="228.9" cy="431.6" r="5.700" fill="#2dc4b8" stroke="#2dc4b8"/><circle cx="179.9" cy="446.7" r="5.700" fill="#3cc8bd" stroke="#3cc8bd"/><circle cx="246.8" cy="433.8" r="5.700" fill="#32c5ba" stroke="#32c5ba"/><circle cx="223.1" cy="415.4" r="5.700" fill="#1abfb2" stroke="#1abfb2"/><circle cx="187.9" cy="440.4" r="5.700" fill="#32c5ba" stroke="#32c5ba"/><circle cx="157.2" cy="447.1" r="5.700" fill="#3cc8bd" stroke="#3cc8bd"/><circle cx="117.4" cy="449.5" r="5.700" fill="#99e1db" stroke="#99e1db"/><circle cx="130.5" cy="441.1" r="5.700" fill="#01b8aa" stroke="#01b8aa"/><circle cx="161.8" cy="444.4" r="5.700" fill="#35c6bb" stroke="#35c6bb"/><circle cx="250.3" cy="435.9" r="5.700" fill="#34c6ba" stroke="#34c6ba"/><circle cx="207.4" cy="447.4" r="5.700" fill="#3ec9be" stroke="#3ec9be"/><circle cx="193.1" cy="425.2" r="5.700" fill="#1abfb2" stroke="#1abfb2"/><circle cx="169.3" cy="456.3" r="5.700" fill="#52cec4" stroke="#52cec4"/><circle cx="251.9" cy="411.0" r="5.700" fill="#1ec0b3" stroke="#1ec0b3"/><circle cx="130.4" cy="450.9" r="5.700" fill="#58d0c6" stroke="#58d0c6"/><circle cx="249.0" cy="443.3" r="5.700" fill="#3bc8bd" stroke="#3bc8bd"/><circle cx="224.6" cy="428.2" r="5.700" fill="#29c3b7" stroke="#29c3b7"/><circle cx="172.7" cy="448.8" r="5.700" fill="#40c9be" stroke="#40c9be"/><circle cx="129.5" cy="454.8" r="5.700" fill="#82dbd4" stroke="#82dbd4"/><circle cx="177.6" cy="436.2" r="5.700" fill="#27c2b6" stroke="#27c2b6"/><circle cx="159.7" cy="459.2" r="5.700" fill="#5fd2c8" stroke="#5fd2c8"/><circle cx="211.0" cy="436.5" r="5.700" fill="#30c5b9" stroke="#30c5b9"/><circle cx="122.7" cy="447.0" r="5.700" fill="#1ec0b3" stroke="#1ec0b3"/><circle cx="118.4" cy="446.7" r="5.700" fill="#01b8aa" stroke="#01b8aa"/><circle cx="178.9" cy="436.8" r="5.700" fill="#29c3b7" stroke="#29c3b7"/><circle cx="151.7" cy="453.5" r="5.700" fill="#52cec4" stroke="#52cec4"/><circle cx="206.3" cy="437.1" r="5.700" fill="#30c5b9" stroke="#30c5b9"/><circle cx="152.4" cy="447.9" r="5.700" fill="#3ec9be" stroke="#3ec9be"/><circle cx="194.9" cy="449.2" r="5.700" fill="#41c9bf" stroke="#41c9bf"/><circle cx="162.5" cy="439.9" r="5.700" fill="#29c3b7" stroke="#29c3b7"/><circle cx="148.8" cy="442.1" r="5.700" fill="#27c2b6" stroke="#27c2b6"/><circle cx="137.5" cy="440.4" r="5.700" fill="#0fbcae" stroke="#0fbcae"/><circle cx="146.7" cy="458.4" r="5.700" fill="#6ad5cc" stroke="#6ad5cc"/><circle cx="184.1" cy="429.3" r="5.700" fill="#1dc0b3" stroke="#1dc0b3"/><circle cx="126.0" cy="445.8" r="5.700" fill="#1abfb2" stroke="#1abfb2"/><circle cx="128.0" cy="448.1" r="5.700" fill="#3dc8bd" stroke="#3dc8bd"/><circle cx="142.4" cy="436.0" r="5.700" fill="#03b8ab" stroke="#03b8ab"/><circle cx="168.0" cy="440.8" r="5.700" fill="#2dc4b8" stroke="#2dc4b8"/><circle cx="136.5" cy="450.7" r="5.700" fill="#4fcdc3" stroke="#4fcdc3"/><circle cx="167.6" cy="438.7" r="5.700" fill="#28c3b7" stroke="#28c3b7"/><circle cx="174.2" cy="451.2" r="5.700" fill="#46cbc0" stroke="#46cbc0"/><circle cx="155.7" cy="440.2" r="5.700" fill="#25c2b6" stroke="#25c2b6"/><circle cx="122.8" cy="447.5" r="5.700" fill="#2bc3b7" stroke="#2bc3b7"/><circle cx="205.5" cy="433.1" r="5.700" fill="#2ac3b7" stroke="#2ac3b7"/><circle cx="167.7" cy="431.6" r="5.700" fill="#17beb1" stroke="#17beb1"/><circle cx="139.4" cy="440.5" r="5.700" fill="#13bdb0" stroke="#13bdb0"/><circle cx="129.9" cy="442.6" r="5.700" fill="#06b9ac" stroke="#06b9ac"/><circle cx="149.5" cy="445.1" r="5.700" fill="#33c6ba" stroke="#33c6ba"/><circle cx="216.8" cy="441.7" r="5.700" fill="#37c7bb" stroke="#37c7bb"/><circle cx="211.9" cy="437.0" r="5.700" fill="#31c5b9" stroke="#31c5b9"/><circle cx="117.4" cy="451.1" r="5.700" fill="#cef0ec" stroke="#cef0ec"/><circle cx="145.8" cy="452.3" r="5.700" fill="#51cec4" stroke="#51cec4"/><circle cx="158.4" cy="445.7" r="5.700" fill="#38c7bc" stroke="#38c7bc"/><circle cx="117.9" cy="449.8" r="5.700" fill="#b0e8e2" stroke="#b0e8e2"/><circle cx="199.5" cy="422.9" r="5.700" fill="#1abfb2" stroke="#1abfb2"/><circle cx="262.2" cy="423.3" r="5.700" fill="#2ac3b7" stroke="#2ac3b7"/><circle cx="133.0" cy="444.4" r="5.700" fill="#20c0b4" stroke="#20c0b4"/><circle cx="125.3" cy="448.0" r="5.700" fill="#3ac8bc" stroke="#3ac8bc"/><circle cx="208.9" cy="431.1" r="5.700" fill="#29c3b7" stroke="#29c3b7"/><circle cx="145.0" cy="459.2" r="5.700" fill="#70d6ce" stroke="#70d6ce"/><circle cx="247.1" cy="424.4" r="5.700" fill="#29c3b7" stroke="#29c3b7"/><circle cx="181.2" cy="448.0" r="5.700" fill="#3fc9be" stroke="#3fc9be"/><circle cx="180.2" cy="440.1" r="5.700" fill="#2fc5b9" stroke="#2fc5b9"/><circle cx="205.1" cy="443.3" r="5.700" fill="#38c7bc" stroke="#38c7bc"/><circle cx="243.2" cy="422.4" r="5.700" fill="#26c2b6" stroke="#26c2b6"/><circle cx="182.0" cy="426.0" r="5.700" fill="#15beb1" stroke="#15beb1"/><circle cx="237.2" cy="426.1" r="5.700" fill="#29c3b7" stroke="#29c3b7"/><circle cx="129.5" cy="446.8" r="5.700" fill="#2fc5b9" stroke="#2fc5b9"/><circle cx="140.8" cy="452.6" r="5.700" fill="#56cfc5" stroke="#56cfc5"/><circle cx="145.2" cy="441.2" r="5.700" fill="#20c0b4" stroke="#20c0b4"/><circle cx="159.9" cy="461.7" r="5.700" fill="#66d4cb" stroke="#66d4cb"/><circle cx="117.5" cy="446.4" r="5.700" fill="#01b8aa" stroke="#01b8aa"/><circle cx="119.9" cy="448.1" r="5.700" fill="#31c5b9" stroke="#31c5b9"/><circle cx="167.5" cy="446.4" r="5.700" fill="#3bc8bd" stroke="#3bc8bd"/><circle cx="136.3" cy="439.7" r="5.700" fill="#07baac" stroke="#07baac"/><circle cx="125.3" cy="450.4" r="5.700" fill="#61d2c9" stroke="#61d2c9"/><circle cx="284.5" cy="424.1" r="5.700" fill="#2ec4b8" stroke="#2ec4b8"/><circle cx="205.0" cy="430.0" r="5.700" fill="#26c2b6" stroke="#26c2b6"/><circle cx="225.3" cy="422.3" r="5.700" fill="#22c1b5" stroke="#22c1b5"/><circle cx="190.5" cy="422.1" r="5.700" fill="#14bdb0" stroke="#14bdb0"/><circle cx="212.1" cy="457.2" r="5.700" fill="#4bccc2" stroke="#4bccc2"/><circle cx="178.8" cy="457.3" r="5.700" fill="#51cec4" stroke="#51cec4"/><circle cx="149.2" cy="436.8" r="5.700" fill="#13bdb0" stroke="#13bdb0"/><circle cx="122.0" cy="452.4" r="5.700" fill="#b5e9e4" stroke="#b5e9e4"/><circle cx="178.3" cy="442.4" r="5.700" fill="#34c6ba" stroke="#34c6ba"/><circle cx="119.6" cy="445.9" r="5.700" fill="#01b8aa" stroke="#01b8aa"/><circle cx="118.4" cy="445.8" r="5.700" fill="#01b8aa" stroke="#01b8aa"/><circle cx="210.8" cy="455.1" r="5.700" fill="#48cbc1" stroke="#48cbc1"/><circle cx="120.0" cy="449.4" r="5.700" fill="#79d9d1" stroke="#79d9d1"/><circle cx="159.4" cy="457.0" r="5.700" fill="#59d0c6" stroke="#59d0c6"/><circle cx="159.5" cy="444.8" r="5.700" fill="#35c6bb" stroke="#35c6bb"/><circle cx="126.2" cy="443.1" r="5.700" fill="#01b8aa" stroke="#01b8aa"/><circle cx="157.0" cy="449.8" r="5.700" fill="#44cac0" stroke="#44cac0"/><circle cx="125.3" cy="449.4" r="5.700" fill="#50cec4" stroke="#50cec4"/><circle cx="188.7" cy="435.0" r="5.700" fill="#29c3b7" stroke="#29c3b7"/><circle cx="126.7" cy="444.2" r="5.700" fill="#07baac" stroke="#07baac"/><circle cx="122.5" cy="450.7" r="5.700" fill="#7cdad2" stroke="#7cdad2"/><circle cx="167.4" cy="450.6" r="5.700" fill="#45cbc0" stroke="#45cbc0"/><circle cx="125.3" cy="449.8" r="5.700" fill="#57cfc6" stroke="#57cfc6"/><circle cx="126.7" cy="451.2" r="5.700" fill="#66d4cb" stroke="#66d4cb"/><circle cx="132.5" cy="446.4" r="5.700" fill="#2fc5b9" stroke="#2fc5b9"/><circle cx="182.7" cy="460.4" r="5.700" fill="#56cfc5" stroke="#56cfc5"/><circle cx="125.0" cy="442.7" r="5.700" fill="#01b8aa" stroke="#01b8aa"/><circle cx="236.2" cy="431.1" r="5.700" fill="#2ec4b8" stroke="#2ec4b8"/><circle cx="179.4" cy="447.1" r="5.700" fill="#3dc8bd" stroke="#3dc8bd"/><circle cx="158.2" cy="454.6" r="5.700" fill="#52cec4" stroke="#52cec4"/><circle cx="218.0" cy="426.1" r="5.700" fill="#25c2b5" stroke="#25c2b5"/><circle cx="163.2" cy="428.9" r="5.700" fill="#0cbbad" stroke="#0cbbad"/><circle cx="180.6" cy="457.3" r="5.700" fill="#51cec4" stroke="#51cec4"/><circle cx="187.4" cy="427.0" r="5.700" fill="#1abfb2" stroke="#1abfb2"/><circle cx="118.4" cy="448.4" r="5.700" fill="#43cabf" stroke="#43cabf"/><circle cx="122.5" cy="453.5" r="5.700" fill="#c4ede9" stroke="#c4ede9"/><circle cx="154.9" cy="450.9" r="5.700" fill="#48cbc1" stroke="#48cbc1"/><circle cx="124.8" cy="452.3" r="5.700" fill="#84dcd4" stroke="#84dcd4"/><circle cx="173.6" cy="456.0" r="5.700" fill="#50cec3" stroke="#50cec3"/><circle cx="224.9" cy="432.4" r="5.700" fill="#2dc4b8" stroke="#2dc4b8"/><circle cx="153.1" cy="451.0" r="5.700" fill="#49ccc1" stroke="#49ccc1"/><circle cx="133.6" cy="446.9" r="5.700" fill="#34c6bb" stroke="#34c6bb"/><circle cx="146.3" cy="452.4" r="5.700" fill="#51cec4" stroke="#51cec4"/><circle cx="223.3" cy="421.9" r="5.700" fill="#21c1b4" stroke="#21c1b4"/><circle cx="124.5" cy="448.5" r="5.700" fill="#42cabf" stroke="#42cabf"/><circle cx="157.5" cy="454.3" r="5.700" fill="#52cec4" stroke="#52cec4"/><circle cx="157.7" cy="452.5" r="5.700" fill="#4ccdc2" stroke="#4ccdc2"/><circle cx="153.8" cy="459.9" r="5.700" fill="#66d4cb" stroke="#66d4cb"/><circle cx="184.2" cy="451.4" r="5.700" fill="#45cbc0" stroke="#45cbc0"/><circle cx="191.6" cy="427.4" r="5.700" fill="#1dc0b3" stroke="#1dc0b3"/><circle cx="130.3" cy="445.1" r="5.700" fill="#20c0b4" stroke="#20c0b4"/><circle cx="211.7" cy="436.0" r="5.700" fill="#30c5b9" stroke="#30c5b9"/><circle cx="250.9" cy="436.6" r="5.700" fill="#35c6bb" stroke="#35c6bb"/><circle cx="194.2" cy="439.6" r="5.700" fill="#32c5ba" stroke="#32c5ba"/><circle cx="142.6" cy="451.4" r="5.700" fill="#4ecdc3" stroke="#4ecdc3"/><circle cx="221.2" cy="435.1" r="5.700" fill="#30c5b9" stroke="#30c5b9"/><circle cx="161.5" cy="436.4" r="5.700" fill="#1ec0b3" stroke="#1ec0b3"/><circle cx="260.1" cy="425.6" r="5.700" fill="#2cc4b8" stroke="#2cc4b8"/><circle cx="139.9" cy="448.7" r="5.700" fill="#41cabf" stroke="#41cabf"/><circle cx="143.4" cy="440.4" r="5.700" fill="#1abfb2" stroke="#1abfb2"/><circle cx="146.9" cy="452.5" r="5.700" fill="#51cec4" stroke="#51cec4"/><circle cx="174.5" cy="452.3" r="5.700" fill="#48cbc1" stroke="#48cbc1"/><circle cx="203.2" cy="443.8" r="5.700" fill="#39c7bc" stroke="#39c7bc"/><circle cx="128.0" cy="444.1" r="5.700" fill="#0dbbae" stroke="#0dbbae"/><circle cx="240.7" cy="416.7" r="5.700" fill="#20c1b4" stroke="#20c1b4"/><circle cx="128.5" cy="450.7" r="5.700" fill="#5ad0c7" stroke="#5ad0c7"/><circle cx="144.3" cy="448.0" r="5.700" fill="#3ec9be" stroke="#3ec9be"/><circle cx="203.9" cy="435.4" r="5.700" fill="#2dc4b8" stroke="#2dc4b8"/><circle cx="133.1" cy="441.5" r="5.700" fill="#09baad" stroke="#09baad"/><circle cx="142.1" cy="437.5" r="5.700" fill="#09baad" stroke="#09baad"/><circle cx="166.4" cy="437.4" r="5.700" fill="#24c2b5" stroke="#24c2b5"/><circle cx="219.1" cy="431.4" r="5.700" fill="#2bc4b8" stroke="#2bc4b8"/><circle cx="159.2" cy="437.1" r="5.700" fill="#1fc0b4" stroke="#1fc0b4"/><circle cx="124.0" cy="448.1" r="5.700" fill="#3bc8bd" stroke="#3bc8bd"/><circle cx="172.5" cy="446.2" r="5.700" fill="#3bc8bd" stroke="#3bc8bd"/><circle cx="147.1" cy="458.6" r="5.700" fill="#6ad5cc" stroke="#6ad5cc"/><circle cx="203.8" cy="444.1" r="5.700" fill="#3ac7bc" stroke="#3ac7bc"/><circle cx="230.3" cy="435.0" r="5.700" fill="#31c5b9" stroke="#31c5b9"/><circle cx="219.3" cy="418.8" r="5.700" fill="#1cbfb3" stroke="#1cbfb3"/><circle cx="204.9" cy="449.7" r="5.700" fill="#41cabf" stroke="#41cabf"/><circle cx="127.3" cy="449.4" r="5.700" fill="#4dcdc2" stroke="#4dcdc2"/><circle cx="135.3" cy="443.1" r="5.700" fill="#1bbfb2" stroke="#1bbfb2"/><circle cx="134.2" cy="443.0" r="5.700" fill="#18beb1" stroke="#18beb1"/><circle cx="169.1" cy="452.8" r="5.700" fill="#4accc2" stroke="#4accc2"/><circle cx="178.0" cy="440.0" r="5.700" fill="#2fc4b9" stroke="#2fc4b9"/><circle cx="123.6" cy="445.4" r="5.700" fill="#02b8aa" stroke="#02b8aa"/><circle cx="119.3" cy="449.8" r="5.700" fill="#b0e8e2" stroke="#b0e8e2"/><circle cx="180.9" cy="431.8" r="5.700" fill="#20c0b4" stroke="#20c0b4"/><circle cx="207.0" cy="418.7" r="5.700" fill="#17beb1" stroke="#17beb1"/><circle cx="123.3" cy="445.3" r="5.700" fill="#01b8aa" stroke="#01b8aa"/><circle cx="190.2" cy="429.6" r="5.700" fill="#20c0b4" stroke="#20c0b4"/><circle cx="184.9" cy="455.3" r="5.700" fill="#4ccdc2" stroke="#4ccdc2"/><circle cx="145.8" cy="455.3" r="5.700" fill="#5ed1c8" stroke="#5ed1c8"/><circle cx="178.6" cy="441.0" r="5.700" fill="#31c5b9" stroke="#31c5b9"/><circle cx="120.4" cy="450.0" r="5.700" fill="#8dded7" stroke="#8dded7"/><circle cx="179.3" cy="455.4" r="5.700" fill="#4dcdc3" stroke="#4dcdc3"/><circle cx="249.8" cy="423.5" r="5.700" fill="#29c3b7" stroke="#29c3b7"/><circle cx="189.2" cy="429.9" r="5.700" fill="#20c1b4" stroke="#20c1b4"/><circle cx="128.5" cy="454.0" r="5.700" fill="#80dbd3" stroke="#80dbd3"/><circle cx="140.3" cy="436.5" r="5.700" fill="#01b8aa" stroke="#01b8aa"/><circle cx="123.2" cy="451.1" r="5.700" fill="#7ddad2" stroke="#7ddad2"/><circle cx="192.1" cy="425.2" r="5.700" fill="#1abfb2" stroke="#1abfb2"/><circle cx="194.4" cy="457.5" r="5.700" fill="#4ecdc3" stroke="#4ecdc3"/><circle cx="195.8" cy="441.6" r="5.700" fill="#35c6bb" stroke="#35c6bb"/><circle cx="119.5" cy="447.2" r="5.700" fill="#01b8aa" stroke="#01b8aa"/><circle cx="176.2" cy="453.4" r="5.700" fill="#4accc2" stroke="#4accc2"/><circle cx="182.0" cy="423.4" r="5.700" fill="#10bcaf" stroke="#10bcaf"/><circle cx="134.3" cy="451.1" r="5.700" fill="#54cfc5" stroke="#54cfc5"/><circle cx="172.8" cy="459.8" r="5.700" fill="#59d0c6" stroke="#59d0c6"/><circle cx="159.4" cy="454.6" r="5.700" fill="#52cec4" stroke="#52cec4"/><circle cx="160.3" cy="452.5" r="5.700" fill="#4bccc2" stroke="#4bccc2"/><circle cx="128.0" cy="454.1" r="5.700" fill="#84dcd4" stroke="#84dcd4"/><circle cx="161.4" cy="441.7" r="5.700" fill="#2dc4b8" stroke="#2dc4b8"/><circle cx="127.5" cy="445.9" r="5.700" fill="#21c1b4" stroke="#21c1b4"/><circle cx="132.1" cy="451.4" r="5.700" fill="#59d0c6" stroke="#59d0c6"/><circle cx="153.9" cy="450.1" r="5.700" fill="#45cbc0" stroke="#45cbc0"/><circle cx="216.1" cy="449.7" r="5.700" fill="#41cabf" stroke="#41cabf"/><circle cx="126.9" cy="453.7" r="5.700" fill="#87ddd5" stroke="#87ddd5"/><circle cx="135.5" cy="454.8" r="5.700" fill="#6cd5cc" stroke="#6cd5cc"/><circle cx="189.8" cy="459.5" r="5.700" fill="#52cec4" stroke="#52cec4"/><circle cx="246.2" cy="423.7" r="5.700" fill="#28c3b7" stroke="#28c3b7"/><circle cx="118.4" cy="448.1" r="5.700" fill="#2cc4b8" stroke="#2cc4b8"/><circle cx="176.0" cy="435.4" r="5.700" fill="#24c2b5" stroke="#24c2b5"/><circle cx="152.3" cy="442.9" r="5.700" fill="#2cc4b8" stroke="#2cc4b8"/><circle cx="155.3" cy="435.7" r="5.700" fill="#17beb1" stroke="#17beb1"/><circle cx="126.1" cy="445.7" r="5.700" fill="#19beb2" stroke="#19beb2"/><circle cx="119.6" cy="446.9" r="5.700" fill="#01b8aa" stroke="#01b8aa"/><circle cx="139.6" cy="437.0" r="5.700" fill="#01b8aa" stroke="#01b8aa"/><circle cx="125.4" cy="451.8" r="5.700" fill="#77d8d0" stroke="#77d8d0"/><circle cx="160.0" cy="444.7" r="5.700" fill="#35c6bb" stroke="#35c6bb"/><circle cx="260.3" cy="431.0" r="5.700" fill="#31c5b9" stroke="#31c5b9"/><circle cx="139.3" cy="456.4" r="5.700" fill="#6dd5cd" stroke="#6dd5cd"/><circle cx="140.7" cy="445.2" r="5.700" fill="#2fc5b9" stroke="#2fc5b9"/><circle cx="218.8" cy="429.1" r="5.700" fill="#28c3b7" stroke="#28c3b7"/><circle cx="120.8" cy="446.2" r="5.700" fill="#01b8aa" stroke="#01b8aa"/><circle cx="198.6" cy="423.9" r="5.700" fill="#1bbfb2" stroke="#1bbfb2"/><circle cx="192.1" cy="457.9" r="5.700" fill="#4fcdc3" stroke="#4fcdc3"/><circle cx="189.5" cy="427.8" r="5.700" fill="#1dc0b3" stroke="#1dc0b3"/><circle cx="128.7" cy="447.8" r="5.700" fill="#39c7bc" stroke="#39c7bc"/><circle cx="128.0" cy="447.2" r="5.700" fill="#32c5ba" stroke="#32c5ba"/><circle cx="137.5" cy="452.8" r="5.700" fill="#5bd1c7" stroke="#5bd1c7"/><circle cx="120.3" cy="447.5" r="5.700" fill="#16beb1" stroke="#16beb1"/><circle cx="163.5" cy="459.2" r="5.700" fill="#5cd1c7" stroke="#5cd1c7"/><circle cx="165.6" cy="459.5" r="5.700" fill="#5cd1c7" stroke="#5cd1c7"/><circle cx="190.6" cy="429.5" r="5.700" fill="#20c0b4" stroke="#20c0b4"/><circle cx="158.4" cy="453.0" r="5.700" fill="#4dcdc3" stroke="#4dcdc3"/><circle cx="180.0" cy="456.0" r="5.700" fill="#4ecdc3" stroke="#4ecdc3"/><circle cx="214.6" cy="455.2" r="5.700" fill="#48cbc1" stroke="#48cbc1"/><circle cx="192.1" cy="447.8" r="5.700" fill="#3fc9be" stroke="#3fc9be"/><circle cx="118.8" cy="450.8" r="5.700" fill="#cef0ec" stroke="#cef0ec"/><circle cx="125.6" cy="452.2" r="5.700" fill="#7bd9d1" stroke="#7bd9d1"/><circle cx="232.1" cy="429.9" r="5.700" fill="#2cc4b8" stroke="#2cc4b8"/><circle cx="216.3" cy="419.0" r="5.700" fill="#1bbfb2" stroke="#1bbfb2"/><circle cx="239.4" cy="427.2" r="5.700" fill="#2ac3b7" stroke="#2ac3b7"/><circle cx="188.9" cy="445.5" r="5.700" fill="#3bc8bd" stroke="#3bc8bd"/><circle cx="175.4" cy="444.4" r="5.700" fill="#37c7bb" stroke="#37c7bb"/><circle cx="223.5" cy="416.2" r="5.700" fill="#1bbfb2" stroke="#1bbfb2"/><circle cx="118.6" cy="451.6" r="5.700" fill="#cef0ec" stroke="#cef0ec"/><circle cx="184.4" cy="432.6" r="5.700" fill="#23c1b5" stroke="#23c1b5"/><circle cx="222.9" cy="421.7" r="5.700" fill="#21c1b4" stroke="#21c1b4"/><circle cx="123.0" cy="444.4" r="5.700" fill="#01b8aa" stroke="#01b8aa"/><circle cx="151.3" cy="444.6" r="5.700" fill="#32c5ba" stroke="#32c5ba"/><circle cx="184.8" cy="447.7" r="5.700" fill="#3ec9be" stroke="#3ec9be"/><circle cx="199.9" cy="437.6" r="5.700" fill="#30c5b9" stroke="#30c5b9"/><circle cx="121.0" cy="445.3" r="5.700" fill="#01b8aa" stroke="#01b8aa"/><circle cx="117.8" cy="449.7" r="5.700" fill="#a8e6e0" stroke="#a8e6e0"/><circle cx="144.2" cy="458.2" r="5.700" fill="#6dd5cd" stroke="#6dd5cd"/><circle cx="186.5" cy="454.2" r="5.700" fill="#4accc1" stroke="#4accc1"/><circle cx="209.6" cy="458.6" r="5.700" fill="#4dcdc2" stroke="#4dcdc2"/><circle cx="169.9" cy="438.6" r="5.700" fill="#29c3b7" stroke="#29c3b7"/><circle cx="162.8" cy="451.2" r="5.700" fill="#47cbc1" stroke="#47cbc1"/><circle cx="155.3" cy="452.4" r="5.700" fill="#4dcdc2" stroke="#4dcdc2"/><circle cx="130.2" cy="446.8" r="5.700" fill="#30c5b9" stroke="#30c5b9"/><circle cx="130.1" cy="443.5" r="5.700" fill="#10bcaf" stroke="#10bcaf"/><circle cx="201.3" cy="427.4" r="5.700" fill="#21c1b4" stroke="#21c1b4"/><circle cx="132.1" cy="440.7" r="5.700" fill="#01b8aa" stroke="#01b8aa"/><circle cx="122.0" cy="446.6" r="5.700" fill="#0dbbae" stroke="#0dbbae"/><circle cx="197.5" cy="446.5" r="5.700" fill="#3dc8bd" stroke="#3dc8bd"/><circle cx="138.5" cy="452.5" r="5.700" fill="#58d0c6" stroke="#58d0c6"/><circle cx="133.7" cy="444.0" r="5.700" fill="#1ec0b3" stroke="#1ec0b3"/><circle cx="145.3" cy="455.0" r="5.700" fill="#5dd1c8" stroke="#5dd1c8"/><circle cx="140.6" cy="452.5" r="5.700" fill="#56cfc5" stroke="#56cfc5"/><circle cx="200.3" cy="440.6" r="5.700" fill="#34c6ba" stroke="#34c6ba"/><circle cx="121.1" cy="450.4" r="5.700" fill="#8bded6" stroke="#8bded6"/><circle cx="257.8" cy="412.4" r="5.700" fill="#20c1b4" stroke="#20c1b4"/><circle cx="150.0" cy="439.4" r="5.700" fill="#1ec0b3" stroke="#1ec0b3"/><circle cx="207.3" cy="418.9" r="5.700" fill="#18beb1" stroke="#18beb1"/><circle cx="167.1" cy="431.5" r="5.700" fill="#16beb1" stroke="#16beb1"/><circle cx="180.0" cy="437.5" r="5.700" fill="#2ac3b7" stroke="#2ac3b7"/><circle cx="274.1" cy="413.9" r="5.700" fill="#25c2b6" stroke="#25c2b6"/><circle cx="132.8" cy="445.4" r="5.700" fill="#28c3b6" stroke="#28c3b6"/><circle cx="135.8" cy="453.3" r="5.700" fill="#61d2c9" stroke="#61d2c9"/><circle cx="151.5" cy="458.7" r="5.700" fill="#65d3ca" stroke="#65d3ca"/><circle cx="144.1" cy="452.6" r="5.700" fill="#53cec4" stroke="#53cec4"/><circle cx="179.9" cy="454.1" r="5.700" fill="#4bccc2" stroke="#4bccc2"/><circle cx="221.4" cy="414.5" r="5.700" fill="#18beb1" stroke="#18beb1"/><circle cx="230.0" cy="431.1" r="5.700" fill="#2dc4b8" stroke="#2dc4b8"/><circle cx="129.4" cy="452.3" r="5.700" fill="#69d4cb" stroke="#69d4cb"/><circle cx="233.2" cy="441.7" r="5.700" fill="#39c7bc" stroke="#39c7bc"/><circle cx="207.5" cy="428.6" r="5.700" fill="#25c2b6" stroke="#25c2b6"/><circle cx="125.9" cy="452.1" r="5.700" fill="#78d8d0" stroke="#78d8d0"/><circle cx="169.2" cy="450.6" r="5.700" fill="#45cbc0" stroke="#45cbc0"/><circle cx="211.3" cy="456.5" r="5.700" fill="#4accc2" stroke="#4accc2"/><circle cx="220.8" cy="427.9" r="5.700" fill="#27c2b6" stroke="#27c2b6"/><circle cx="125.0" cy="445.7" r="5.700" fill="#13bdb0" stroke="#13bdb0"/><circle cx="192.6" cy="439.5" r="5.700" fill="#31c5b9" stroke="#31c5b9"/><circle cx="234.9" cy="426.4" r="5.700" fill="#29c3b7" stroke="#29c3b7"/><circle cx="124.5" cy="450.2" r="5.700" fill="#61d2c9" stroke="#61d2c9"/><circle cx="126.8" cy="452.1" r="5.700" fill="#72d7ce" stroke="#72d7ce"/><circle cx="221.8" cy="417.5" r="5.700" fill="#1bbfb3" stroke="#1bbfb3"/><circle cx="126.5" cy="450.0" r="5.700" fill="#57cfc6" stroke="#57cfc6"/><circle cx="128.9" cy="442.2" r="5.700" fill="#01b8aa" stroke="#01b8aa"/><circle cx="130.6" cy="449.4" r="5.700" fill="#49ccc1" stroke="#49ccc1"/><circle cx="161.2" cy="433.5" r="5.700" fill="#16beb1" stroke="#16beb1"/><circle cx="131.7" cy="455.3" r="5.700" fill="#7cdad2" stroke="#7cdad2"/><circle cx="201.6" cy="435.7" r="5.700" fill="#2dc4b8" stroke="#2dc4b8"/><circle cx="252.8" cy="440.2" r="5.700" fill="#38c7bc" stroke="#38c7bc"/><circle cx="125.7" cy="450.0" r="5.700" fill="#59d0c6" stroke="#59d0c6"/><circle cx="128.6" cy="447.2" r="5.700" fill="#33c6ba" stroke="#33c6ba"/><circle cx="274.4" cy="429.8" r="5.700" fill="#31c5b9" stroke="#31c5b9"/><circle cx="256.1" cy="434.8" r="5.700" fill="#34c6ba" stroke="#34c6ba"/><circle cx="151.8" cy="444.5" r="5.700" fill="#32c5ba" stroke="#32c5ba"/><circle cx="253.8" cy="414.9" r="5.700" fill="#22c1b5" stroke="#22c1b5"/><circle cx="151.5" cy="452.1" r="5.700" fill="#4dcdc2" stroke="#4dcdc2"/><circle cx="210.0" cy="455.0" r="5.700" fill="#48cbc1" stroke="#48cbc1"/><circle cx="147.0" cy="457.3" r="5.700" fill="#65d3ca" stroke="#65d3ca"/><circle cx="203.8" cy="436.8" r="5.700" fill="#2fc5b9" stroke="#2fc5b9"/><circle cx="227.8" cy="433.2" r="5.700" fill="#2fc5b9" stroke="#2fc5b9"/><circle cx="200.3" cy="448.4" r="5.700" fill="#40c9be" stroke="#40c9be"/><circle cx="223.3" cy="440.7" r="5.700" fill="#37c7bb" stroke="#37c7bb"/><circle cx="233.8" cy="418.8" r="5.700" fill="#21c1b4" stroke="#21c1b4"/><circle cx="147.5" cy="447.7" r="5.700" fill="#3dc8bd" stroke="#3dc8bd"/><circle cx="137.4" cy="440.8" r="5.700" fill="#11bcaf" stroke="#11bcaf"/><circle cx="142.7" cy="455.1" r="5.700" fill="#60d2c9" stroke="#60d2c9"/><circle cx="157.2" cy="440.7" r="5.700" fill="#28c3b7" stroke="#28c3b7"/><circle cx="141.7" cy="455.9" r="5.700" fill="#66d4ca" stroke="#66d4ca"/><circle cx="174.5" cy="444.2" r="5.700" fill="#37c7bb" stroke="#37c7bb"/><circle cx="142.8" cy="449.6" r="5.700" fill="#46cbc0" stroke="#46cbc0"/><circle cx="214.2" cy="454.9" r="5.700" fill="#48cbc1" stroke="#48cbc1"/><circle cx="158.9" cy="454.4" r="5.700" fill="#51cec4" stroke="#51cec4"/><circle cx="225.5" cy="428.3" r="5.700" fill="#29c3b7" stroke="#29c3b7"/><circle cx="204.8" cy="449.3" r="5.700" fill="#41c9bf" stroke="#41c9bf"/><circle cx="187.8" cy="454.1" r="5.700" fill="#49ccc1" stroke="#49ccc1"/><circle cx="240.3" cy="436.6" r="5.700" fill="#34c6ba" stroke="#34c6ba"/><circle cx="142.7" cy="440.9" r="5.700" fill="#1bbfb2" stroke="#1bbfb2"/><circle cx="231.1" cy="431.3" r="5.700" fill="#2dc4b8" stroke="#2dc4b8"/><circle cx="212.3" cy="445.2" r="5.700" fill="#3bc8bd" stroke="#3bc8bd"/><circle cx="210.1" cy="455.8" r="5.700" fill="#49ccc1" stroke="#49ccc1"/><circle cx="221.4" cy="434.1" r="5.700" fill="#2fc5b9" stroke="#2fc5b9"/><circle cx="178.8" cy="455.3" r="5.700" fill="#4dcdc3" stroke="#4dcdc3"/><circle cx="204.2" cy="440.9" r="5.700" fill="#35c6bb" stroke="#35c6bb"/><circle cx="158.4" cy="442.2" r="5.700" fill="#2dc4b8" stroke="#2dc4b8"/><circle cx="129.9" cy="452.1" r="5.700" fill="#65d3ca" stroke="#65d3ca"/><circle cx="154.3" cy="457.7" r="5.700" fill="#5fd2c8" stroke="#5fd2c8"/><circle cx="233.4" cy="422.9" r="5.700" fill="#25c2b6" stroke="#25c2b6"/><circle cx="124.6" cy="446.4" r="5.700" fill="#1dc0b3" stroke="#1dc0b3"/><circle cx="128.1" cy="450.8" r="5.700" fill="#5cd1c7" stroke="#5cd1c7"/><circle cx="146.7" cy="446.9" r="5.700" fill="#39c7bc" stroke="#39c7bc"/><circle cx="178.3" cy="461.2" r="5.700" fill="#59d0c6" stroke="#59d0c6"/><circle cx="216.2" cy="447.9" r="5.700" fill="#3fc9be" stroke="#3fc9be"/><circle cx="168.0" cy="431.5" r="5.700" fill="#17beb1" stroke="#17beb1"/><circle cx="214.9" cy="423.5" r="5.700" fill="#20c1b4" stroke="#20c1b4"/><circle cx="129.3" cy="448.8" r="5.700" fill="#44cac0" stroke="#44cac0"/><circle cx="169.3" cy="427.2" r="5.700" fill="#0ebbae" stroke="#0ebbae"/><circle cx="205.9" cy="459.8" r="5.700" fill="#4fcdc3" stroke="#4fcdc3"/><circle cx="121.1" cy="446.7" r="5.700" fill="#03b8ab" stroke="#03b8ab"/><circle cx="233.1" cy="422.4" r="5.700" fill="#24c2b5" stroke="#24c2b5"/><circle cx="148.3" cy="444.3" r="5.700" fill="#2fc5b9" stroke="#2fc5b9"/><circle cx="182.3" cy="428.9" r="5.700" fill="#1bbfb2" stroke="#1bbfb2"/><circle cx="131.3" cy="450.2" r="5.700" fill="#50cec3" stroke="#50cec3"/><circle cx="235.4" cy="416.3" r="5.700" fill="#1ec0b3" stroke="#1ec0b3"/><circle cx="240.3" cy="433.0" r="5.700" fill="#30c5b9" stroke="#30c5b9"/><circle cx="173.7" cy="444.8" r="5.700" fill="#38c7bc" stroke="#38c7bc"/><circle cx="194.9" cy="464.5" r="5.700" fill="#59d0c6" stroke="#59d0c6"/><circle cx="203.4" cy="436.2" r="5.700" fill="#2ec4b9" stroke="#2ec4b9"/><circle cx="120.2" cy="446.9" r="5.700" fill="#01b8aa" stroke="#01b8aa"/><circle cx="124.0" cy="450.3" r="5.700" fill="#66d4ca" stroke="#66d4ca"/><circle cx="227.8" cy="418.6" r="5.700" fill="#1fc0b4" stroke="#1fc0b4"/><circle cx="164.7" cy="439.0" r="5.700" fill="#27c2b6" stroke="#27c2b6"/><circle cx="151.3" cy="450.3" r="5.700" fill="#47cbc0" stroke="#47cbc0"/><circle cx="165.2" cy="442.4" r="5.700" fill="#30c5b9" stroke="#30c5b9"/><circle cx="213.0" cy="449.2" r="5.700" fill="#41c9be" stroke="#41c9be"/><circle cx="122.4" cy="447.1" r="5.700" fill="#1fc0b4" stroke="#1fc0b4"/><circle cx="123.0" cy="449.3" r="5.700" fill="#56cfc5" stroke="#56cfc5"/><circle cx="155.8" cy="455.4" r="5.700" fill="#56cfc5" stroke="#56cfc5"/><circle cx="152.2" cy="442.2" r="5.700" fill="#2ac3b7" stroke="#2ac3b7"/><circle cx="186.3" cy="455.6" r="5.700" fill="#4ccdc2" stroke="#4ccdc2"/><circle cx="162.7" cy="444.1" r="5.700" fill="#34c6ba" stroke="#34c6ba"/><circle cx="120.8" cy="445.6" r="5.700" fill="#01b8aa" stroke="#01b8aa"/><circle cx="147.3" cy="452.2" r="5.700" fill="#4fcdc3" stroke="#4fcdc3"/><circle cx="128.1" cy="448.3" r="5.700" fill="#3fc9be" stroke="#3fc9be"/><circle cx="122.5" cy="453.5" r="5.700" fill="#c4ede9" stroke="#c4ede9"/><circle cx="154.9" cy="438.0" r="5.700" fill="#1ec0b3" stroke="#1ec0b3"/><circle cx="128.3" cy="446.4" r="5.700" fill="#29c3b7" stroke="#29c3b7"/><circle cx="218.3" cy="436.5" r="5.700" fill="#31c5ba" stroke="#31c5ba"/><circle cx="148.7" cy="444.3" r="5.700" fill="#30c5b9" stroke="#30c5b9"/><circle cx="123.7" cy="444.6" r="5.700" fill="#01b8aa" stroke="#01b8aa"/><circle cx="121.1" cy="446.5" r="5.700" fill="#01b8aa" stroke="#01b8aa"/><circle cx="180.5" cy="430.2" r="5.700" fill="#1cbfb3" stroke="#1cbfb3"/><circle cx="172.3" cy="436.3" r="5.700" fill="#25c2b5" stroke="#25c2b5"/><circle cx="149.7" cy="456.3" r="5.700" fill="#5ed1c8" stroke="#5ed1c8"/><circle cx="170.6" cy="440.2" r="5.700" fill="#2dc4b8" stroke="#2dc4b8"/><circle cx="161.9" cy="452.0" r="5.700" fill="#4accc1" stroke="#4accc1"/><circle cx="153.8" cy="446.5" r="5.700" fill="#39c7bc" stroke="#39c7bc"/><circle cx="130.4" cy="448.5" r="5.700" fill="#41c9bf" stroke="#41c9bf"/><circle cx="150.3" cy="449.8" r="5.700" fill="#45cbc0" stroke="#45cbc0"/><circle cx="124.9" cy="449.9" r="5.700" fill="#5ad0c7" stroke="#5ad0c7"/><circle cx="224.7" cy="420.7" r="5.700" fill="#20c0b4" stroke="#20c0b4"/><circle cx="144.1" cy="457.2" r="5.700" fill="#68d4cb" stroke="#68d4cb"/><circle cx="120.0" cy="445.4" r="5.700" fill="#01b8aa" stroke="#01b8aa"/><circle cx="210.0" cy="427.3" r="5.700" fill="#24c2b5" stroke="#24c2b5"/><circle cx="123.6" cy="445.9" r="5.700" fill="#0cbbae" stroke="#0cbbae"/><circle cx="174.5" cy="428.5" r="5.700" fill="#15bdb0" stroke="#15bdb0"/><circle cx="197.9" cy="419.8" r="5.700" fill="#14bdb0" stroke="#14bdb0"/><circle cx="127.5" cy="446.3" r="5.700" fill="#26c2b6" stroke="#26c2b6"/><circle cx="183.3" cy="446.1" r="5.700" fill="#3bc8bd" stroke="#3bc8bd"/><circle cx="130.2" cy="445.6" r="5.700" fill="#25c2b5" stroke="#25c2b5"/><circle cx="161.6" cy="443.1" r="5.700" fill="#31c5b9" stroke="#31c5b9"/><circle cx="118.2" cy="450.5" r="5.700" fill="#cef0ec" stroke="#cef0ec"/><circle cx="193.0" cy="432.0" r="5.700" fill="#25c2b6" stroke="#25c2b6"/><circle cx="233.9" cy="433.8" r="5.700" fill="#30c5b9" stroke="#30c5b9"/><circle cx="127.0" cy="444.1" r="5.700" fill="#07baac" stroke="#07baac"/><circle cx="123.5" cy="445.4" r="5.700" fill="#01b8aa" stroke="#01b8aa"/><circle cx="150.5" cy="445.8" r="5.700" fill="#36c6bb" stroke="#36c6bb"/><circle cx="132.9" cy="453.5" r="5.700" fill="#69d4cb" stroke="#69d4cb"/><circle cx="245.5" cy="440.5" r="5.700" fill="#38c7bc" stroke="#38c7bc"/><circle cx="130.6" cy="455.1" r="5.700" fill="#80dbd3" stroke="#80dbd3"/><circle cx="179.4" cy="458.6" r="5.700" fill="#54cfc5" stroke="#54cfc5"/><circle cx="159.6" cy="434.8" r="5.700" fill="#18beb1" stroke="#18beb1"/><circle cx="131.4" cy="444.7" r="5.700" fill="#1fc0b4" stroke="#1fc0b4"/><circle cx="182.3" cy="431.6" r="5.700" fill="#20c0b4" stroke="#20c0b4"/><circle cx="231.3" cy="416.9" r="5.700" fill="#1ec0b3" stroke="#1ec0b3"/><circle cx="130.4" cy="449.0" r="5.700" fill="#46cbc0" stroke="#46cbc0"/><circle cx="194.3" cy="456.0" r="5.700" fill="#4cccc2" stroke="#4cccc2"/><circle cx="119.9" cy="449.1" r="5.700" fill="#6bd5cc" stroke="#6bd5cc"/><circle cx="153.3" cy="441.9" r="5.700" fill="#29c3b7" stroke="#29c3b7"/><circle cx="165.4" cy="432.1" r="5.700" fill="#16beb1" stroke="#16beb1"/><circle cx="130.1" cy="444.0" r="5.700" fill="#15bdb0" stroke="#15bdb0"/><circle cx="147.5" cy="450.2" r="5.700" fill="#47cbc1" stroke="#47cbc1"/><circle cx="119.3" cy="446.1" r="5.700" fill="#01b8aa" stroke="#01b8aa"/><circle cx="187.2" cy="461.7" r="5.700" fill="#57cfc6" stroke="#57cfc6"/><circle cx="127.1" cy="452.3" r="5.700" fill="#73d7cf" stroke="#73d7cf"/><circle cx="281.1" cy="410.5" r="5.700" fill="#23c1b5" stroke="#23c1b5"/><circle cx="128.3" cy="445.8" r="5.700" fill="#22c1b5" stroke="#22c1b5"/><circle cx="213.2" cy="423.2" r="5.700" fill="#20c0b4" stroke="#20c0b4"/><circle cx="144.9" cy="449.0" r="5.700" fill="#42cabf" stroke="#42cabf"/><circle cx="123.3" cy="446.9" r="5.700" fill="#20c0b4" stroke="#20c0b4"/><circle cx="257.6" cy="414.6" r="5.700" fill="#22c1b5" stroke="#22c1b5"/><circle cx="138.2" cy="451.3" r="5.700" fill="#51cec4" stroke="#51cec4"/><circle cx="218.5" cy="439.0" r="5.700" fill="#34c6ba" stroke="#34c6ba"/><circle cx="197.1" cy="431.8" r="5.700" fill="#26c2b6" stroke="#26c2b6"/><circle cx="198.5" cy="446.1" r="5.700" fill="#3cc8bd" stroke="#3cc8bd"/><circle cx="194.5" cy="428.2" r="5.700" fill="#20c0b4" stroke="#20c0b4"/><circle cx="244.8" cy="424.2" r="5.700" fill="#28c3b7" stroke="#28c3b7"/><circle cx="237.4" cy="414.4" r="5.700" fill="#1dc0b3" stroke="#1dc0b3"/><circle cx="122.3" cy="450.9" r="5.700" fill="#84dcd4" stroke="#84dcd4"/><circle cx="181.4" cy="457.5" r="5.700" fill="#51cec4" stroke="#51cec4"/><circle cx="152.6" cy="436.2" r="5.700" fill="#15bdb0" stroke="#15bdb0"/><circle cx="196.8" cy="429.2" r="5.700" fill="#22c1b5" stroke="#22c1b5"/><circle cx="201.7" cy="418.1" r="5.700" fill="#14bdb0" stroke="#14bdb0"/><circle cx="222.8" cy="417.0" r="5.700" fill="#1bbfb2" stroke="#1bbfb2"/><circle cx="145.1" cy="450.4" r="5.700" fill="#49ccc1" stroke="#49ccc1"/><circle cx="184.0" cy="446.6" r="5.700" fill="#3cc8bd" stroke="#3cc8bd"/><circle cx="179.0" cy="438.5" r="5.700" fill="#2cc4b8" stroke="#2cc4b8"/><circle cx="133.6" cy="456.5" r="5.700" fill="#7edad2" stroke="#7edad2"/><circle cx="121.9" cy="444.6" r="5.700" fill="#01b8aa" stroke="#01b8aa"/><circle cx="168.9" cy="437.7" r="5.700" fill="#26c2b6" stroke="#26c2b6"/><circle cx="126.3" cy="448.7" r="5.700" fill="#44cac0" stroke="#44cac0"/><circle cx="127.7" cy="451.4" r="5.700" fill="#65d3ca" stroke="#65d3ca"/><circle cx="222.1" cy="438.9" r="5.700" fill="#35c6bb" stroke="#35c6bb"/><circle cx="237.3" cy="427.3" r="5.700" fill="#2ac3b7" stroke="#2ac3b7"/><circle cx="261.0" cy="423.2" r="5.700" fill="#2ac3b7" stroke="#2ac3b7"/><circle cx="250.1" cy="443.5" r="5.700" fill="#3bc8bd" stroke="#3bc8bd"/><circle cx="260.3" cy="428.6" r="5.700" fill="#2fc4b9" stroke="#2fc4b9"/><circle cx="244.0" cy="439.7" r="5.700" fill="#37c7bb" stroke="#37c7bb"/><circle cx="247.2" cy="429.7" r="5.700" fill="#2ec4b8" stroke="#2ec4b8"/><circle cx="243.4" cy="430.0" r="5.700" fill="#2ec4b8" stroke="#2ec4b8"/><circle cx="253.2" cy="442.7" r="5.700" fill="#3ac8bc" stroke="#3ac8bc"/><circle cx="237.7" cy="434.0" r="5.700" fill="#31c5b9" stroke="#31c5b9"/><circle cx="255.0" cy="425.1" r="5.700" fill="#2bc3b8" stroke="#2bc3b8"/><circle cx="220.4" cy="418.3" r="5.700" fill="#1cbfb3" stroke="#1cbfb3"/><circle cx="226.9" cy="421.8" r="5.700" fill="#22c1b5" stroke="#22c1b5"/><circle cx="217.5" cy="452.0" r="5.700" fill="#44cac0" stroke="#44cac0"/><circle cx="257.0" cy="432.8" r="5.700" fill="#32c5ba" stroke="#32c5ba"/><circle cx="250.4" cy="433.7" r="5.700" fill="#32c5ba" stroke="#32c5ba"/><circle cx="265.9" cy="424.9" r="5.700" fill="#2cc4b8" stroke="#2cc4b8"/><circle cx="256.9" cy="431.5" r="5.700" fill="#31c5b9" stroke="#31c5b9"/><circle cx="228.5" cy="435.2" r="5.700" fill="#31c5b9" stroke="#31c5b9"/><circle cx="218.8" cy="419.3" r="5.700" fill="#1dc0b3" stroke="#1dc0b3"/><circle cx="246.0" cy="441.4" r="5.700" fill="#39c7bc" stroke="#39c7bc"/><circle cx="219.9" cy="419.2" r="5.700" fill="#1dc0b3" stroke="#1dc0b3"/><circle cx="253.7" cy="433.5" r="5.700" fill="#32c5ba" stroke="#32c5ba"/><circle cx="225.9" cy="434.4" r="5.700" fill="#30c5b9" stroke="#30c5b9"/><circle cx="265.2" cy="419.4" r="5.700" fill="#28c3b6" stroke="#28c3b6"/><circle cx="236.0" cy="426.6" r="5.700" fill="#29c3b7" stroke="#29c3b7"/><circle cx="217.2" cy="445.9" r="5.700" fill="#3dc8bd" stroke="#3dc8bd"/><circle cx="216.1" cy="421.4" r="5.700" fill="#1ec0b3" stroke="#1ec0b3"/><circle cx="216.2" cy="426.0" r="5.700" fill="#24c2b5" stroke="#24c2b5"/><circle cx="232.8" cy="428.3" r="5.700" fill="#2ac3b7" stroke="#2ac3b7"/><circle cx="241.3" cy="421.5" r="5.700" fill="#25c2b6" stroke="#25c2b6"/><circle cx="239.3" cy="433.9" r="5.700" fill="#31c5b9" stroke="#31c5b9"/><circle cx="236.2" cy="419.5" r="5.700" fill="#22c1b5" stroke="#22c1b5"/><circle cx="228.8" cy="418.0" r="5.700" fill="#1ec0b3" stroke="#1ec0b3"/><circle cx="223.1" cy="417.6" r="5.700" fill="#1cbfb3" stroke="#1cbfb3"/><circle cx="215.8" cy="431.2" r="5.700" fill="#2ac3b7" stroke="#2ac3b7"/><circle cx="244.7" cy="422.3" r="5.700" fill="#27c2b6" stroke="#27c2b6"/><circle cx="260.9" cy="426.7" r="5.700" fill="#2dc4b8" stroke="#2dc4b8"/><circle cx="227.5" cy="413.7" r="5.700" fill="#19bfb2" stroke="#19bfb2"/><circle cx="220.7" cy="449.1" r="5.700" fill="#40c9be" stroke="#40c9be"/><circle cx="266.6" cy="435.6" r="5.700" fill="#35c6bb" stroke="#35c6bb"/><circle cx="246.1" cy="425.2" r="5.700" fill="#2ac3b7" stroke="#2ac3b7"/><circle cx="236.2" cy="442.9" r="5.700" fill="#3ac8bc" stroke="#3ac8bc"/><circle cx="228.9" cy="415.6" r="5.700" fill="#1cbfb3" stroke="#1cbfb3"/><circle cx="262.9" cy="427.8" r="5.700" fill="#2ec4b9" stroke="#2ec4b9"/><circle cx="243.7" cy="441.2" r="5.700" fill="#39c7bc" stroke="#39c7bc"/><circle cx="235.2" cy="431.5" r="5.700" fill="#2ec4b9" stroke="#2ec4b9"/><circle cx="249.3" cy="426.8" r="5.700" fill="#2cc4b8" stroke="#2cc4b8"/><circle cx="227.5" cy="421.5" r="5.700" fill="#22c1b5" stroke="#22c1b5"/><circle cx="252.4" cy="438.1" r="5.700" fill="#36c7bb" stroke="#36c7bb"/><circle cx="217.5" cy="448.3" r="5.700" fill="#3fc9be" stroke="#3fc9be"/><circle cx="253.0" cy="424.5" r="5.700" fill="#2ac3b7" stroke="#2ac3b7"/><circle cx="250.0" cy="444.7" r="5.700" fill="#3cc8bd" stroke="#3cc8bd"/><circle cx="235.8" cy="436.7" r="5.700" fill="#34c6ba" stroke="#34c6ba"/><circle cx="250.5" cy="417.3" r="5.700" fill="#23c1b5" stroke="#23c1b5"/><circle cx="222.7" cy="427.1" r="5.700" fill="#27c2b6" stroke="#27c2b6"/><circle cx="240.7" cy="420.4" r="5.700" fill="#24c2b5" stroke="#24c2b5"/><circle cx="230.1" cy="427.0" r="5.700" fill="#28c3b7" stroke="#28c3b7"/><circle cx="251.3" cy="428.6" r="5.700" fill="#2ec4b8" stroke="#2ec4b8"/><circle cx="220.4" cy="423.8" r="5.700" fill="#22c1b5" stroke="#22c1b5"/><circle cx="233.1" cy="426.9" r="5.700" fill="#29c3b7" stroke="#29c3b7"/><circle cx="267.1" cy="420.2" r="5.700" fill="#29c3b7" stroke="#29c3b7"/><circle cx="220.5" cy="432.5" r="5.700" fill="#2dc4b8" stroke="#2dc4b8"/><circle cx="268.1" cy="414.3" r="5.700" fill="#24c2b5" stroke="#24c2b5"/><circle cx="266.6" cy="425.1" r="5.700" fill="#2dc4b8" stroke="#2dc4b8"/><circle cx="240.4" cy="424.4" r="5.700" fill="#28c3b6" stroke="#28c3b6"/><circle cx="226.3" cy="421.4" r="5.700" fill="#21c1b4" stroke="#21c1b4"/><circle cx="250.2" cy="425.7" r="5.700" fill="#2bc3b7" stroke="#2bc3b7"/><circle cx="252.3" cy="442.2" r="5.700" fill="#3ac8bc" stroke="#3ac8bc"/><circle cx="241.9" cy="428.7" r="5.700" fill="#2cc4b8" stroke="#2cc4b8"/><circle cx="230.8" cy="430.9" r="5.700" fill="#2dc4b8" stroke="#2dc4b8"/><circle cx="249.6" cy="428.7" r="5.700" fill="#2dc4b8" stroke="#2dc4b8"/><circle cx="217.6" cy="444.0" r="5.700" fill="#3ac8bc" stroke="#3ac8bc"/><circle cx="257.3" cy="435.3" r="5.700" fill="#34c6ba" stroke="#34c6ba"/><circle cx="252.8" cy="437.9" r="5.700" fill="#36c7bb" stroke="#36c7bb"/><circle cx="264.1" cy="433.4" r="5.700" fill="#33c6ba" stroke="#33c6ba"/><circle cx="234.5" cy="418.1" r="5.700" fill="#20c0b4" stroke="#20c0b4"/><circle cx="246.4" cy="445.8" r="5.700" fill="#3dc8bd" stroke="#3dc8bd"/><circle cx="250.7" cy="440.3" r="5.700" fill="#38c7bc" stroke="#38c7bc"/><circle cx="231.9" cy="430.6" r="5.700" fill="#2dc4b8" stroke="#2dc4b8"/><circle cx="225.8" cy="426.1" r="5.700" fill="#26c2b6" stroke="#26c2b6"/><circle cx="220.6" cy="449.0" r="5.700" fill="#40c9be" stroke="#40c9be"/><circle cx="234.8" cy="415.7" r="5.700" fill="#1ec0b3" stroke="#1ec0b3"/><circle cx="243.9" cy="439.9" r="5.700" fill="#37c7bc" stroke="#37c7bc"/><circle cx="254.9" cy="440.2" r="5.700" fill="#38c7bc" stroke="#38c7bc"/><circle cx="225.8" cy="416.9" r="5.700" fill="#1cbfb3" stroke="#1cbfb3"/><circle cx="229.9" cy="432.1" r="5.700" fill="#2ec4b8" stroke="#2ec4b8"/><circle cx="234.4" cy="422.0" r="5.700" fill="#24c2b5" stroke="#24c2b5"/><circle cx="218.9" cy="418.6" r="5.700" fill="#1cbfb3" stroke="#1cbfb3"/><circle cx="232.0" cy="428.7" r="5.700" fill="#2bc3b7" stroke="#2bc3b7"/><circle cx="223.0" cy="435.7" r="5.700" fill="#31c5b9" stroke="#31c5b9"/><circle cx="226.9" cy="416.7" r="5.700" fill="#1cbfb3" stroke="#1cbfb3"/><circle cx="241.1" cy="438.4" r="5.700" fill="#36c6bb" stroke="#36c6bb"/><circle cx="251.8" cy="434.6" r="5.700" fill="#33c6ba" stroke="#33c6ba"/><circle cx="223.6" cy="428.1" r="5.700" fill="#28c3b7" stroke="#28c3b7"/><circle cx="612.8" cy="207.4" r="5.700" fill="#04b9ab" stroke="#04b9ab"/><circle cx="510.9" cy="261.8" r="5.700" fill="#06b9ac" stroke="#06b9ac"/><circle cx="452.4" cy="298.1" r="5.700" fill="#09baad" stroke="#09baad"/><circle cx="485.3" cy="294.2" r="5.700" fill="#0dbbae" stroke="#0dbbae"/><circle cx="493.9" cy="302.8" r="5.700" fill="#11bcaf" stroke="#11bcaf"/><circle cx="497.2" cy="322.7" r="5.700" fill="#17beb1" stroke="#17beb1"/><circle cx="350.5" cy="344.4" r="5.700" fill="#09baad" stroke="#09baad"/><circle cx="768.3" cy="501.4" r="5.700" fill="#49ccc1" stroke="#49ccc1"/><circle cx="289.3" cy="370.8" r="5.700" fill="#09baac" stroke="#09baac"/><circle cx="285.1" cy="375.0" r="5.700" fill="#0abbad" stroke="#0abbad"/><circle cx="330.2" cy="366.7" r="5.700" fill="#11bcaf" stroke="#11bcaf"/><circle cx="334.9" cy="371.5" r="5.700" fill="#15bdb0" stroke="#15bdb0"/><circle cx="355.3" cy="373.3" r="5.700" fill="#19bfb2" stroke="#19bfb2"/><circle cx="331.8" cy="383.3" r="5.700" fill="#1bbfb2" stroke="#1bbfb2"/><circle cx="359.2" cy="390.5" r="5.700" fill="#22c1b5" stroke="#22c1b5"/><circle cx="342.9" cy="393.2" r="5.700" fill="#22c1b5" stroke="#22c1b5"/><circle cx="347.3" cy="404.7" r="5.700" fill="#28c3b7" stroke="#28c3b7"/><circle cx="343.8" cy="414.8" r="5.700" fill="#2dc4b8" stroke="#2dc4b8"/><circle cx="332.5" cy="413.0" r="5.700" fill="#2cc4b8" stroke="#2cc4b8"/><circle cx="333.2" cy="418.6" r="5.700" fill="#2fc4b9" stroke="#2fc4b9"/><circle cx="307.2" cy="389.5" r="5.700" fill="#1abfb2" stroke="#1abfb2"/><circle cx="318.3" cy="390.2" r="5.700" fill="#1cbfb3" stroke="#1cbfb3"/><circle cx="319.6" cy="393.7" r="5.700" fill="#1fc0b4" stroke="#1fc0b4"/><circle cx="298.9" cy="393.2" r="5.700" fill="#1bbfb2" stroke="#1bbfb2"/><circle cx="276.5" cy="395.0" r="5.700" fill="#17beb1" stroke="#17beb1"/><circle cx="273.0" cy="397.1" r="5.700" fill="#17beb1" stroke="#17beb1"/><circle cx="230.6" cy="395.0" r="5.700" fill="#06b9ac" stroke="#06b9ac"/><circle cx="232.5" cy="400.2" r="5.700" fill="#0dbbae" stroke="#0dbbae"/><circle cx="254.1" cy="403.8" r="5.700" fill="#18beb1" stroke="#18beb1"/><circle cx="259.9" cy="405.4" r="5.700" fill="#1bbfb2" stroke="#1bbfb2"/><circle cx="294.5" cy="400.6" r="5.700" fill="#1fc0b4" stroke="#1fc0b4"/><circle cx="290.3" cy="402.0" r="5.700" fill="#1fc0b4" stroke="#1fc0b4"/><circle cx="306.2" cy="408.2" r="5.700" fill="#26c2b6" stroke="#26c2b6"/><circle cx="311.1" cy="405.4" r="5.700" fill="#25c2b5" stroke="#25c2b5"/><circle cx="319.4" cy="404.7" r="5.700" fill="#25c2b6" stroke="#25c2b6"/><circle cx="316.6" cy="412.3" r="5.700" fill="#29c3b7" stroke="#29c3b7"/><circle cx="322.8" cy="413.7" r="5.700" fill="#2bc3b8" stroke="#2bc3b8"/><circle cx="299.3" cy="413.7" r="5.700" fill="#28c3b7" stroke="#28c3b7"/><circle cx="293.8" cy="421.3" r="5.700" fill="#2dc4b8" stroke="#2dc4b8"/><circle cx="306.2" cy="420.6" r="5.700" fill="#2ec4b8" stroke="#2ec4b8"/><circle cx="315.2" cy="419.9" r="5.700" fill="#2ec4b8" stroke="#2ec4b8"/><circle cx="311.1" cy="425.5" r="5.700" fill="#31c5ba" stroke="#31c5ba"/><circle cx="323.1" cy="431.4" r="5.700" fill="#35c6bb" stroke="#35c6bb"/><circle cx="304.8" cy="439.2" r="5.700" fill="#3ac7bc" stroke="#3ac7bc"/><circle cx="293.4" cy="442.4" r="5.700" fill="#3bc8bd" stroke="#3bc8bd"/><circle cx="312.1" cy="447.2" r="5.700" fill="#3fc9be" stroke="#3fc9be"/><circle cx="274.8" cy="443.5" r="5.700" fill="#3cc8bd" stroke="#3cc8bd"/><circle cx="279.9" cy="435.9" r="5.700" fill="#36c7bb" stroke="#36c7bb"/><circle cx="272.3" cy="430.3" r="5.700" fill="#31c5ba" stroke="#31c5ba"/><circle cx="279.3" cy="426.2" r="5.700" fill="#2fc5b9" stroke="#2fc5b9"/><circle cx="284.8" cy="422.0" r="5.700" fill="#2cc4b8" stroke="#2cc4b8"/><circle cx="283.4" cy="408.2" r="5.700" fill="#22c1b5" stroke="#22c1b5"/><circle cx="272.3" cy="406.8" r="5.700" fill="#1fc0b4" stroke="#1fc0b4"/><circle cx="277.9" cy="413.7" r="5.700" fill="#25c2b6" stroke="#25c2b6"/><circle cx="259.9" cy="443.9" r="5.700" fill="#3cc8bd" stroke="#3cc8bd"/><circle cx="247.4" cy="453.4" r="5.700" fill="#44cac0" stroke="#44cac0"/><circle cx="259.2" cy="456.0" r="5.700" fill="#46cbc0" stroke="#46cbc0"/><circle cx="264.0" cy="460.8" r="5.700" fill="#4accc1" stroke="#4accc1"/><circle cx="228.1" cy="458.1" r="5.700" fill="#4accc2" stroke="#4accc2"/><circle cx="227.3" cy="464.3" r="5.700" fill="#51cec4" stroke="#51cec4"/><circle cx="234.7" cy="466.4" r="5.700" fill="#52cec4" stroke="#52cec4"/><circle cx="256.1" cy="477.6" r="5.700" fill="#59d0c6" stroke="#59d0c6"/><circle cx="276.9" cy="471.9" r="5.700" fill="#51cec4" stroke="#51cec4"/><circle cx="286.3" cy="470.4" r="5.700" fill="#4fcdc3" stroke="#4fcdc3"/><circle cx="240.9" cy="491.4" r="5.700" fill="#6ad5cc" stroke="#6ad5cc"/><circle cx="270.6" cy="497.9" r="5.700" fill="#67d4cb" stroke="#67d4cb"/><circle cx="324.5" cy="465.7" r="5.700" fill="#4accc1" stroke="#4accc1"/><circle cx="326.3" cy="476.3" r="5.700" fill="#50cec3" stroke="#50cec3"/><circle cx="353.3" cy="464.9" r="5.700" fill="#48cbc1" stroke="#48cbc1"/><circle cx="334.1" cy="493.9" r="5.700" fill="#59d0c6" stroke="#59d0c6"/><circle cx="327.1" cy="504.4" r="5.700" fill="#60d2c9" stroke="#60d2c9"/><circle cx="390.6" cy="378.5" r="5.700" fill="#20c1b4" stroke="#20c1b4"/><circle cx="435.1" cy="377.7" r="5.700" fill="#24c2b5" stroke="#24c2b5"/><circle cx="426.9" cy="384.4" r="5.700" fill="#26c2b6" stroke="#26c2b6"/><circle cx="424.9" cy="390.4" r="5.700" fill="#29c3b7" stroke="#29c3b7"/><circle cx="433.1" cy="390.4" r="5.700" fill="#29c3b7" stroke="#29c3b7"/><circle cx="359.5" cy="390.6" r="5.700" fill="#23c1b5" stroke="#23c1b5"/><circle cx="400.6" cy="396.6" r="5.700" fill="#29c3b7" stroke="#29c3b7"/><circle cx="394.7" cy="398.9" r="5.700" fill="#2ac3b7" stroke="#2ac3b7"/><circle cx="393.3" cy="404.1" r="5.700" fill="#2cc4b8" stroke="#2cc4b8"/><circle cx="385.7" cy="410.9" r="5.700" fill="#2fc4b9" stroke="#2fc4b9"/><circle cx="415.8" cy="416.3" r="5.700" fill="#32c6ba" stroke="#32c6ba"/><circle cx="407.9" cy="425.4" r="5.700" fill="#36c6bb" stroke="#36c6bb"/><circle cx="486.3" cy="426.9" r="5.700" fill="#38c7bc" stroke="#38c7bc"/><circle cx="372.3" cy="442.3" r="5.700" fill="#3dc8bd" stroke="#3dc8bd"/><circle cx="424.2" cy="492.9" r="5.700" fill="#51cec4" stroke="#51cec4"/><circle cx="360.7" cy="558.4" r="5.700" fill="#76d8d0" stroke="#76d8d0"/><circle cx="175.2" cy="507.3" r="5.700" fill="#bcebe6" stroke="#bcebe6"/><circle cx="201.9" cy="523.3" r="5.700" fill="#ace7e1" stroke="#ace7e1"/><circle cx="201.7" cy="537.7" r="5.700" fill="#c1ece8" stroke="#c1ece8"/><circle cx="219.7" cy="544.5" r="5.700" fill="#b2e8e3" stroke="#b2e8e3"/><circle cx="265.6" cy="625.9" r="5.700" fill="#cef0ec" stroke="#cef0ec"/><circle cx="194.8" cy="486.5" r="5.700" fill="#7cd9d1" stroke="#7cd9d1"/><circle cx="204.3" cy="487.1" r="5.700" fill="#76d8d0" stroke="#76d8d0"/><circle cx="216.7" cy="482.5" r="5.700" fill="#69d5cc" stroke="#69d5cc"/><circle cx="197.3" cy="475.9" r="5.700" fill="#6ad5cc" stroke="#6ad5cc"/><circle cx="205.3" cy="475.7" r="5.700" fill="#65d3ca" stroke="#65d3ca"/><circle cx="216.7" cy="473.3" r="5.700" fill="#5ed1c8" stroke="#5ed1c8"/><circle cx="146.8" cy="469.9" r="5.700" fill="#9ae2db" stroke="#9ae2db"/><circle cx="155.1" cy="470.6" r="5.700" fill="#88ddd5" stroke="#88ddd5"/><circle cx="165.9" cy="468.7" r="5.700" fill="#73d7cf" stroke="#73d7cf"/></g></svg>
<div class="t" style="left:91.1px;top:174.0px;font-size:10px;line-height:14px;color:#777777;letter-spacing:-0.36px;">10K</div>
<div class="t" style="left:96.3px;top:227.0px;font-size:10px;line-height:14px;color:#777777;letter-spacing:-0.37px;">8K</div>
<div class="t" style="left:96.3px;top:281.0px;font-size:10px;line-height:14px;color:#777777;letter-spacing:-0.37px;">6K</div>
<div class="t" style="left:96.3px;top:334.0px;font-size:10px;line-height:14px;color:#777777;letter-spacing:-0.37px;">4K</div>
<div class="t" style="left:96.3px;top:388.0px;font-size:10px;line-height:14px;color:#777777;letter-spacing:-0.37px;">2K</div>
<div class="t" style="left:96.3px;top:442.0px;font-size:10px;line-height:14px;color:#777777;letter-spacing:-0.37px;">0K</div>
<div class="t" style="left:93.2px;top:495.0px;font-size:10px;line-height:14px;color:#777777;letter-spacing:-0.31px;">-2K</div>
<div class="t" style="left:93.2px;top:549.0px;font-size:10px;line-height:14px;color:#777777;letter-spacing:-0.31px;">-4K</div>
<div class="t" style="left:93.2px;top:602.0px;font-size:10px;line-height:14px;color:#777777;letter-spacing:-0.31px;">-6K</div>
<div class="t" style="left:93.2px;top:656.0px;font-size:10px;line-height:14px;color:#777777;letter-spacing:-0.31px;">-8K</div>
<div class="t" style="left:111.8px;top:667.0px;font-size:10px;line-height:14px;color:#777777;letter-spacing:-0.37px;">0K</div>
<div class="t" style="left:241.8px;top:667.0px;font-size:10px;line-height:14px;color:#777777;letter-spacing:-0.37px;">5K</div>
<div class="t" style="left:369.1px;top:667.0px;font-size:10px;line-height:14px;color:#777777;letter-spacing:-0.36px;">10K</div>
<div class="t" style="left:499.1px;top:667.0px;font-size:10px;line-height:14px;color:#777777;letter-spacing:-0.36px;">15K</div>
<div class="t" style="left:629.1px;top:667.0px;font-size:10px;line-height:14px;color:#777777;letter-spacing:-0.36px;">20K</div>
<div class="t" style="left:759.1px;top:667.0px;font-size:10px;line-height:14px;color:#777777;letter-spacing:-0.36px;">25K</div>
<div class="t" style="left:889.1px;top:667.0px;font-size:10px;line-height:14px;color:#777777;letter-spacing:-0.36px;">30K</div>
<div class="t" style="left:495.5px;top:687.0px;font-size:10px;line-height:14px;color:#777777;letter-spacing:-0.20px;">Sales</div>
<div class="t" style="left:53px;top:414.700px;width:60px;height:14px;line-height:14px;font-size:10px;color:#777777;text-align:center;transform:rotate(-90deg);letter-spacing:-0.1px;">Profit</div>
<!-- vizpane -->
<div class="b" style="left:1298.5px;top:116px;width:151.5px;height:733px;background:#444444;"></div>
<div class="b" style="left:1298.5px;top:116px;width:151.5px;height:40px;background:#222222;border-top:1.500px solid #000;border-left:1px solid #000;"></div>
<div class="t" style="left:1309.0px;top:128.0px;font-size:12px;line-height:16px;color:#ffffff;font-weight:bold;letter-spacing:-0.58px;">VISUALIZATIONS</div>
<svg class="b" style="left:1430px;top:129.5px;" width="9" height="13" viewBox="0 0 9 13"><path d="M1.500 1l5.500 5.500-5.500 5.500" fill="none" stroke="#fff" stroke-width="1.200"/></svg>
<svg class="b" style="left:1306.2px;top:160px;overflow:visible;" width="16" height="16" viewBox="0 0 16 16"><path d="M1 0v15h15" fill="none" stroke="#8c8c8c" stroke-width="1"/><rect x="2" y="2" width="4" height="5" fill="#bdbdbd"/><rect x="6" y="2" width="7" height="5" fill="#ef9a44"/><rect x="2" y="8.500" width="6" height="5" fill="#bdbdbd"/><rect x="8" y="8.500" width="7" height="5" fill="#ef9a44"/></svg>
<svg class="b" style="left:1329.6px;top:160px;overflow:visible;" width="16" height="16" viewBox="0 0 16 16"><path d="M1 0v15h15" fill="none" stroke="#8c8c8c" stroke-width="1"/><rect x="3" y="4" width="5" height="7.500" fill="#ef9a44"/><rect x="3" y="11" width="5" height="3.500" fill="#bdbdbd"/><rect x="9" y="1.500" width="5" height="7" fill="#ef9a44"/><rect x="9" y="8.500" width="5" height="6" fill="#bdbdbd"/></svg>
<svg class="b" style="left:1352.8px;top:160px;overflow:visible;" width="16" height="16" viewBox="0 0 16 16"><path d="M1 0v15h15" fill="none" stroke="#8c8c8c" stroke-width="1"/><rect x="2" y="1.500" width="9" height="3" fill="#f4cd82"/><rect x="2" y="4.500" width="13" height="3" fill="#8db4e2"/><rect x="2" y="8.500" width="11" height="3" fill="#f4cd82"/><rect x="2" y="11.500" width="8" height="2.500" fill="#8db4e2"/></svg>
<svg class="b" style="left:1376.3px;top:160px;overflow:visible;" width="16" height="16" viewBox="0 0 16 16"><path d="M1 0v15h15" fill="none" stroke="#8c8c8c" stroke-width="1"/><rect x="2.500" y="6" width="3" height="8.500" fill="#f4cd82"/><rect x="5.500" y="1" width="3" height="13.500" fill="#8db4e2"/><rect x="9.500" y="3" width="3" height="11.500" fill="#f4cd82"/><rect x="12.500" y="6" width="2.500" height="8.500" fill="#8db4e2"/></svg>
<svg class="b" style="left:1399.7px;top:160px;overflow:visible;" width="16" height="16" viewBox="0 0 16 16"><path d="M1 0v15h15" fill="none" stroke="#8c8c8c" stroke-width="1"/><rect x="2" y="2" width="4" height="5" fill="#7d7d7d"/><rect x="6" y="2" width="9" height="5" fill="#8db4e2"/><rect x="2" y="8.500" width="6" height="5" fill="#7d7d7d"/><rect x="8" y="8.500" width="7" height="5" fill="#8db4e2"/></svg>
<svg class="b" style="left:1423px;top:160px;overflow:visible;" width="16" height="16" viewBox="0 0 16 16"><path d="M1 0v15h15" fill="none" stroke="#8c8c8c" stroke-width="1"/><rect x="3" y="1.500" width="5" height="7.500" fill="#8db4e2"/><rect x="3" y="9" width="5" height="5.500" fill="#7d7d7d"/><rect x="9.500" y="1.500" width="5" height="9" fill="#8db4e2"/><rect x="9.500" y="10.500" width="5" height="4" fill="#7d7d7d"/></svg>
<svg class="b" style="left:1306.2px;top:179.5px;overflow:visible;" width="16" height="16" viewBox="0 0 16 16"><path d="M1 0v15h15" fill="none" stroke="#8c8c8c" stroke-width="1"/><path d="M2 13l4-5 3-4 3 2 3 4" fill="none" stroke="#efb9a0" stroke-width="1.200"/><path d="M2 9l3-2 4 2.500 5-5" fill="none" stroke="#3f7dc1" stroke-width="1.200"/></svg>
<svg class="b" style="left:1329.6px;top:179.5px;overflow:visible;" width="16" height="16" viewBox="0 0 16 16"><path d="M1 0v15h15" fill="none" stroke="#8c8c8c" stroke-width="1"/><path d="M1.500 14.500v-7l4-3.500 3.500 3 4-4 3 2v9.500z" fill="#bdbdbd"/><path d="M1.500 7.500l4-3.500 3.500 3-2 3-5.500-1z" fill="#f4cd82"/><path d="M7 10l5.500-7 3.500 2v6l-4 0.500-2.500 2z" fill="#ef9a44"/><ellipse cx="5" cy="9" rx="2.500" ry="1.300" fill="#8db4e2"/></svg>
<svg class="b" style="left:1352.8px;top:179.5px;overflow:visible;" width="16" height="16" viewBox="0 0 16 16"><path d="M1 0v15h15" fill="none" stroke="#8c8c8c" stroke-width="1"/><path d="M1.500 6l2.500-3 3 3 3-3.500 3 3.500 3-2v11h-15z" fill="#f4cd82"/><path d="M1.500 9l2.500-1.500 3 2.500 3-3.500 3 3.500 3-2.500v7.500h-15z" fill="#3f7dc1"/><path d="M1.500 13l2.500-2 3 2.500 3-2.500 3 2.500 3-2.500v4.500h-15z" fill="#ef9a44"/></svg>
<svg class="b" style="left:1376.3px;top:179.5px;overflow:visible;" width="16" height="16" viewBox="0 0 16 16"><path d="M1 0v15h15" fill="none" stroke="#8c8c8c" stroke-width="1"/><rect x="3" y="2.500" width="3.500" height="7.500" fill="#ef9a44"/><rect x="3" y="10" width="3.500" height="4.500" fill="#bdbdbd"/><rect x="8.500" y="6" width="3.500" height="5" fill="#ef9a44"/><rect x="8.500" y="11" width="3.500" height="3.500" fill="#bdbdbd"/><rect x="14" y="0.500" width="1.500" height="14" fill="#ef9a44"/><path d="M1.500 11.500l4-2.500 4 2 5-3" fill="none" stroke="#e8673c" stroke-width="0.900"/></svg>
<svg class="b" style="left:1399.7px;top:179.5px;overflow:visible;" width="16" height="16" viewBox="0 0 16 16"><path d="M1 0v15h15" fill="none" stroke="#8c8c8c" stroke-width="1"/><rect x="2.500" y="6" width="2.500" height="8.500" fill="#f4cd82"/><rect x="5" y="1.500" width="2.500" height="13" fill="#8db4e2"/><rect x="8.500" y="4" width="2.500" height="10.500" fill="#f4cd82"/><rect x="11" y="7" width="2.500" height="7.500" fill="#8db4e2"/><rect x="14.200" y="0.500" width="1.300" height="14" fill="#ef9a44"/><path d="M1.500 11l3.500-3 3.500 3 5-4" fill="none" stroke="#e8673c" stroke-width="0.900"/></svg>
<svg class="b" style="left:1423px;top:179.5px;overflow:visible;" width="16" height="16" viewBox="0 0 16 16"><path d="M1 0v15h15" fill="none" stroke="#8c8c8c" stroke-width="1"/><path d="M2.500 6.500h3.500v-1.500h3.500v-1.500h3.500v-1.500h2v12h-12.500z" fill="#f4cd82"/><path d="M2.500 9h12.500v3h-12.500z" fill="#8db4e2"/><path d="M2.500 12h12.500v2.500h-12.500z" fill="#ef9a44"/><path d="M6 5v9.500M9.500 3.500v11M13 2v12.500" stroke="#e9a56a" stroke-width="1" opacity="0.700"/></svg>
<svg class="b" style="left:1306.2px;top:199.7px;overflow:visible;" width="16" height="16" viewBox="0 0 16 16"><path d="M1 0v15h15" fill="none" stroke="#8c8c8c" stroke-width="1"/><rect x="3" y="4" width="2.500" height="10.500" fill="#d8d8d8"/><rect x="5.500" y="6" width="2" height="8.500" fill="#e8573a"/><path d="M7.500 6v6.500h2.500v-8.500" fill="none" stroke="#e8573a" stroke-width="1.300"/><rect x="9.500" y="2" width="2" height="10" fill="#5fb3a0"/><rect x="12" y="2" width="2.500" height="12.500" fill="#d8d8d8"/></svg>
<svg class="b" style="left:1329.6px;top:199.7px;overflow:visible;" width="16" height="16" viewBox="0 0 16 16"><rect x="-1.500" y="-1.500" width="19" height="19" fill="#252525" stroke="#f2c811" stroke-width="1.500"/><g fill="#5c5c5c"><circle cx="4" cy="4.500" r="1.300"/><circle cx="11.500" cy="3.500" r="1.300"/><circle cx="8.500" cy="8.500" r="1.400"/><circle cx="3.500" cy="11" r="1.300"/><circle cx="13" cy="12.500" r="1.400"/><circle cx="14.500" cy="8" r="0.900"/></g></svg>
<svg class="b" style="left:1352.8px;top:199.7px;overflow:visible;" width="16" height="16" viewBox="0 0 16 16"><circle cx="8" cy="8" r="7.500" fill="#8db4e2"/><path d="M8 8l-4 6.300a7.500 7.500 0 0 1-3.300-8z" fill="#f1b7a8"/><path d="M8 8l-7.300-1.700a7.500 7.500 0 0 1 7.300-5.800z" fill="#f6deb4"/><path d="M8 0.500v7.500l-4 6.300" fill="none" stroke="#333" stroke-width="0.800"/></svg>
<svg class="b" style="left:1376.3px;top:199.7px;overflow:visible;" width="16" height="16" viewBox="0 0 16 16"><circle cx="8" cy="8" r="5.700" fill="none" stroke="#3f7dc1" stroke-width="3.600"/><path d="M8 2.300a5.700 5.700 0 0 1 4.900 2.800" fill="none" stroke="#f4cd82" stroke-width="3.600"/><path d="M3.100 5.100a5.700 5.700 0 0 1 4.900-2.800" fill="none" stroke="#8db4e2" stroke-width="3.600"/><g stroke="#444" stroke-width="0.700"><path d="M8 0.500v3.600M14.500 5l-3.200 1.600M13 14l-2.300-2.700M3 14l2.300-2.700M1.500 5l3.200 1.600"/></g></svg>
<svg class="b" style="left:1399.7px;top:199.7px;overflow:visible;" width="16" height="16" viewBox="0 0 16 16"><rect x="0.500" y="0.500" width="15" height="15" fill="#fff"/><rect x="4.500" y="1" width="10.500" height="2.500" fill="#bcd4f0"/><rect x="4.500" y="4.500" width="8" height="3.500" fill="#bcd4f0"/><rect x="13" y="4.500" width="2" height="3.500" fill="#d6e4f6"/><path d="M4 0.500v8M0.500 8.500h15M8 8.500v7M0.500 4h3.500" stroke="#9a9a9a" stroke-width="0.800" fill="none"/></svg>
<svg class="b" style="left:1423px;top:199.7px;overflow:visible;" width="16" height="16" viewBox="0 0 16 16"><circle cx="8" cy="8" r="7.300" fill="#fff" stroke="#3f7dc1" stroke-width="1"/><path d="M1.500 5.500h13M1.500 10.500h13M5.500 1.500v13M10.500 1.500v13" stroke="#8fbfa6" stroke-width="1"/></svg>
<svg class="b" style="left:1306.2px;top:219.8px;overflow:visible;" width="16" height="16" viewBox="0 0 16 16"><path d="M1 2l6-1 5 1.500 0.500 3-3 2.500 1 3-4 3.500-3-2-3-4z" fill="#c9c9c9"/><path d="M1 5l4-0.500 1.500 3-3 2z" fill="#3f7dc1"/><path d="M7 9l5-1 1 4-4 3-2.500-2z" fill="#8db4e2"/><path d="M13 1h2.500v8l-2.500 0.500z" fill="#f4cd82"/><path d="M3 11l3 0.500 1 3.500-2.500-0.500z" fill="#e0e0e0"/></svg>
<svg class="b" style="left:1329.6px;top:219.8px;overflow:visible;" width="16" height="16" viewBox="0 0 16 16"><rect x="0.500" y="0.500" width="15" height="3" fill="#8db4e2"/><rect x="2" y="4.200" width="12" height="3" fill="#f4cd82"/><rect x="3.800" y="8" width="8.500" height="3" fill="#8db4e2"/><rect x="5.500" y="11.700" width="5" height="3" fill="#8db4e2"/></svg>
<svg class="b" style="left:1352.8px;top:219.8px;overflow:visible;" width="16" height="16" viewBox="0 0 16 16"><path d="M2 12.500a6.200 6.200 0 0 1 9.500-6.200" fill="none" stroke="#f4cd82" stroke-width="2.600"/><path d="M11.500 6.300a6.200 6.200 0 0 1 2.700 6.200" fill="none" stroke="#6fae98" stroke-width="2.600"/><path d="M4.600 12.500a3.600 3.600 0 0 1 7 0z" fill="#333"/></svg>
<svg class="b" style="left:1376.3px;top:219.8px;overflow:visible;" width="16" height="16" viewBox="0 0 16 16"><rect x="0.500" y="1.500" width="15" height="11.500" fill="#fff" stroke="#999" stroke-width="0.600"/><path d="M3.500 10.500h9" stroke="#8a8a8a" stroke-width="1"/><text x="8" y="8.500" font-family="Liberation Sans,sans-serif" font-size="7.500" font-weight="bold" fill="#5b8fd0" text-anchor="middle">123</text></svg>
<svg class="b" style="left:1399.7px;top:219.8px;overflow:visible;" width="16" height="16" viewBox="0 0 16 16"><rect x="1" y="0.500" width="14" height="15" fill="#fff" stroke="#999" stroke-width="0.600"/><rect x="3.200" y="2.500" width="1.300" height="11" fill="#9a9a9a"/><path d="M6.500 3.200h5" stroke="#5b8fd0" stroke-width="1.200"/><path d="M6.500 5.500h3" stroke="#aac4e8" stroke-width="0.900"/><path d="M6.500 8h5" stroke="#5b8fd0" stroke-width="1.200"/><path d="M6.500 10.300h3" stroke="#aac4e8" stroke-width="0.900"/></svg>
<svg class="b" style="left:1423px;top:219.8px;overflow:visible;" width="16" height="16" viewBox="0 0 16 16"><rect x="0.500" y="2" width="15" height="11" fill="#fff" stroke="#999" stroke-width="0.600"/><path d="M3.500 7.500l2.500-3 2.500 3z" fill="#5ba585"/><path d="M9 4.500l2.500 3 2.500-3z" fill="#e2583c"/><path d="M3.500 10.500h9.500" stroke="#8a8a8a" stroke-width="1"/></svg>
<svg class="b" style="left:1306.2px;top:239.8px;overflow:visible;" width="16" height="16" viewBox="0 0 16 16"><rect x="0.500" y="0.500" width="14" height="13" fill="#fff"/><rect x="0.500" y="0.500" width="14" height="2" fill="#3f7dc1"/><rect x="2.500" y="4.500" width="2.500" height="1.800" fill="#8db4e2"/><rect x="2.500" y="7.500" width="2.500" height="1.800" fill="#f0b860"/><rect x="2.500" y="10.500" width="2.500" height="1.800" fill="#f1a99a"/><path d="M8 8.500h8.500l-3.300 3.500v4.200l-1.900-1.200v-3z" fill="#8a8a8a"/></svg>
<svg class="b" style="left:1329.6px;top:239.8px;overflow:visible;" width="16" height="16" viewBox="0 0 16 16"><rect x="1" y="0.500" width="14" height="15" fill="#fff"/><rect x="1" y="0.500" width="14" height="2.200" fill="#3f7dc1"/><path d="M1 6.500h14M1 11h14M5.700 2.700v12.800M10.400 2.700v12.800" stroke="#555" stroke-width="0.900"/></svg>
<svg class="b" style="left:1352.8px;top:239.8px;overflow:visible;" width="16" height="16" viewBox="0 0 16 16"><rect x="1" y="0.500" width="14" height="15" fill="#fff"/><rect x="10.400" y="2.700" width="4.600" height="12.800" fill="#cfe0f5"/><rect x="1" y="11" width="14" height="4.500" fill="#cfe0f5"/><rect x="1" y="0.500" width="14" height="2.200" fill="#3f7dc1"/><path d="M1 6.500h14M1 11h14M5.700 2.700v12.800M10.400 2.700v12.800" stroke="#666" stroke-width="0.900"/></svg>
<svg class="b" style="left:1376.3px;top:239.8px;overflow:visible;" width="16" height="16" viewBox="0 0 16 16"><text x="8" y="15.300" font-family="Liberation Sans,sans-serif" font-size="20" font-weight="bold" fill="#7fa9dc" text-anchor="middle">R</text></svg>
<svg class="b" style="left:1399.7px;top:239.8px;overflow:visible;" width="16" height="16" viewBox="0 0 16 16"><circle cx="8" cy="8" r="7.800" fill="#9a9a9a"/><circle cx="8" cy="8" r="6.800" fill="#2c6fc0"/><path d="M3 5l4-2 3.500 0.500-2 3-4 1zM9 9l4-2 1 3-3 3-3-1zM4 10l2.500 0.500 0.500 2.500-2-0.500z" fill="#3fb54a"/><path d="M2 8h12M8 1.500c-4 3-4 10 0 13M8 1.500c4 3 4 10 0 13" fill="none" stroke="#b9d2ef" stroke-width="0.600"/></svg>
<svg class="b" style="left:1423px;top:239.8px;overflow:visible;" width="16" height="16" viewBox="0 0 16 16"><g fill="#fff"><circle cx="2.500" cy="6.500" r="1.300"/><circle cx="8" cy="6.500" r="1.300"/><circle cx="13.500" cy="6.500" r="1.300"/></g></svg>
<div class="b" style="left:1299.5px;top:259.3px;width:150px;height:30px;background:#222222;"></div>
<svg class="b" style="left:1314.5px;top:265px;" width="20" height="19" viewBox="0 0 20 19"><path d="M2.500 1.600h14" stroke="#fff" stroke-width="1.100"/><g fill="none" stroke="#fff" stroke-width="1.200" stroke-dasharray="1.900 0.900"><rect x="1.100" y="3.600" width="17.300" height="6.400" rx="1.200"/><path d="M1.500 6.800h16.500"/><rect x="1.100" y="11.600" width="17.300" height="5.800" rx="1.200"/></g></svg>
<svg class="b" style="left:1349px;top:265px;" width="17" height="19" viewBox="0 0 17 19"><rect x="1" y="1" width="12.500" height="4" rx="1.500" fill="none" stroke="#fff" stroke-width="1.300"/><path d="M13.500 3h2v5h-7.500v2.500" fill="none" stroke="#fff" stroke-width="1.200"/><rect x="6.300" y="10.500" width="3.400" height="7.500" rx="1" fill="none" stroke="#fff" stroke-width="1.300"/></svg>
<svg class="b" style="left:1381.5px;top:265px;" width="19" height="19" viewBox="0 0 19 19"><circle cx="7.500" cy="7.500" r="6.500" fill="none" stroke="#fff" stroke-width="1.300"/><path d="M12.300 12.300l5.500 5.500" stroke="#fff" stroke-width="1.500"/><path d="M2.500 8l2.500-2 2.500 1.500 4-3.500" fill="none" stroke="#fff" stroke-width="1"/><path d="M4.500 13v-3.500M7 14v-4.500M9.500 13.500v-4.500" stroke="#fff" stroke-width="1.300"/></svg>
<div class="b" style="left:1309px;top:287.3px;width:30.5px;height:2.1px;background:#f2c811;"></div>
<div class="b" style="left:1299.5px;top:289.3px;width:150px;height:412.7px;background:#4a4a4a;"></div>
<div class="t" style="left:1309.0px;top:295.0px;font-size:10px;line-height:14px;color:#c8c8c8;letter-spacing:-0.15px;">Details</div>
<div class="b" style="left:1303px;top:313px;width:141px;height:30px;border:1px dashed #6a6a6a;border-radius:3px;"></div>
<div class="b" style="left:1305.5px;top:316.8px;width:136.5px;height:18.0px;background:#333333;border-radius:3px;"></div><div class="t" style="left:1309.0px;top:319.0px;font-size:10px;line-height:14px;color:#ffffff;letter-spacing:-0.02px;text-shadow:0 0 0.6px #fff;">Customer Name</div><svg class="b" style="left:1417px;top:323.8px;" width="7" height="5" viewBox="0 0 7 5"><path d="M0.300 0.500h6l-3 3.500z" fill="#9a9a9a"/></svg><svg class="b" style="left:1430px;top:321.8px;" width="8" height="8" viewBox="0 0 8 8"><path d="M1 1l6 6M7 1l-6 6" stroke="#8c8c8c" stroke-width="0.900"/></svg>
<div class="t" style="left:1309.0px;top:353.0px;font-size:10px;line-height:14px;color:#c8c8c8;letter-spacing:-0.14px;">Legend</div>
<div class="b" style="left:1303px;top:370px;width:141px;height:23.5px;border:1px dashed #6a6a6a;border-radius:3px;"></div><div class="t" style="left:1311.7px;top:375.0px;font-size:10px;line-height:14px;color:#bdbdbd;letter-spacing:-0.00px;">Drag data fields here</div>
<div class="t" style="left:1309.0px;top:403.0px;font-size:10px;line-height:14px;color:#c8c8c8;letter-spacing:-0.30px;">X Axis</div>
<div class="b" style="left:1303px;top:420.3px;width:141px;height:24.69999999999999px;border:1px dashed #6a6a6a;border-radius:3px;"></div>
<div class="b" style="left:1305.5px;top:424px;width:136.5px;height:18.30000000000001px;background:#333333;border-radius:3px;"></div><div class="t" style="left:1309.0px;top:427.0px;font-size:10px;line-height:14px;color:#ffffff;letter-spacing:-0.40px;text-shadow:0 0 0.6px #fff;">Sales</div><svg class="b" style="left:1417px;top:431.15px;" width="7" height="5" viewBox="0 0 7 5"><path d="M0.300 0.500h6l-3 3.500z" fill="#9a9a9a"/></svg><svg class="b" style="left:1430px;top:429.15px;" width="8" height="8" viewBox="0 0 8 8"><path d="M1 1l6 6M7 1l-6 6" stroke="#8c8c8c" stroke-width="0.900"/></svg>
<div class="t" style="left:1309.0px;top:454.0px;font-size:10px;line-height:14px;color:#c8c8c8;letter-spacing:-0.27px;">Y Axis</div>
<div class="b" style="left:1303px;top:471.5px;width:141px;height:25.0px;border:1px dashed #6a6a6a;border-radius:3px;"></div>
<div class="b" style="left:1305.5px;top:475.3px;width:136.5px;height:18.399999999999977px;background:#333333;border-radius:3px;"></div><div class="t" style="left:1309.0px;top:478.0px;font-size:10px;line-height:14px;color:#ffffff;letter-spacing:0.19px;text-shadow:0 0 0.6px #fff;">Profit</div><svg class="b" style="left:1417px;top:482.5px;" width="7" height="5" viewBox="0 0 7 5"><path d="M0.300 0.500h6l-3 3.500z" fill="#9a9a9a"/></svg><svg class="b" style="left:1430px;top:480.5px;" width="8" height="8" viewBox="0 0 8 8"><path d="M1 1l6 6M7 1l-6 6" stroke="#8c8c8c" stroke-width="0.900"/></svg>
<div class="t" style="left:1309.0px;top:506.0px;font-size:10px;line-height:14px;color:#c8c8c8;letter-spacing:-0.49px;">Size</div>
<div class="b" style="left:1303px;top:523.5px;width:141px;height:23.0px;border:1px dashed #6a6a6a;border-radius:3px;"></div><div class="t" style="left:1311.7px;top:529.0px;font-size:10px;line-height:14px;color:#bdbdbd;letter-spacing:-0.00px;">Drag data fields here</div>
<div class="t" style="left:1309.0px;top:556.0px;font-size:10px;line-height:14px;color:#c8c8c8;letter-spacing:0.03px;">Color saturation</div>
<div class="b" style="left:1303px;top:573.5px;width:141px;height:25.299999999999955px;border:1px dashed #6a6a6a;border-radius:3px;"></div>
<div class="b" style="left:1305.5px;top:577.5px;width:136.5px;height:18.0px;background:#333333;border-radius:3px;"></div><div class="t" style="left:1309.0px;top:580.0px;font-size:10px;line-height:14px;color:#ffffff;letter-spacing:-0.00px;text-shadow:0 0 0.6px #fff;">Profit measure</div><svg class="b" style="left:1417px;top:584.5px;" width="7" height="5" viewBox="0 0 7 5"><path d="M0.300 0.500h6l-3 3.500z" fill="#9a9a9a"/></svg><svg class="b" style="left:1430px;top:582.5px;" width="8" height="8" viewBox="0 0 8 8"><path d="M1 1l6 6M7 1l-6 6" stroke="#8c8c8c" stroke-width="0.900"/></svg>
<div class="t" style="left:1309.0px;top:608.0px;font-size:10px;line-height:14px;color:#c8c8c8;letter-spacing:-0.23px;">Play Axis</div>
<div class="b" style="left:1303px;top:625.5px;width:141px;height:23.299999999999955px;border:1px dashed #6a6a6a;border-radius:3px;"></div><div class="t" style="left:1311.7px;top:631.0px;font-size:10px;line-height:14px;color:#bdbdbd;letter-spacing:-0.00px;">Drag data fields here</div>
<div class="t" style="left:1309.0px;top:658.0px;font-size:10px;line-height:14px;color:#c8c8c8;letter-spacing:0.07px;">Tooltips</div>
<div class="b" style="left:1303px;top:675.5px;width:141px;height:23.299999999999955px;border:1px dashed #6a6a6a;border-radius:3px;"></div><div class="t" style="left:1311.7px;top:681.0px;font-size:10px;line-height:14px;color:#bdbdbd;letter-spacing:-0.00px;">Drag data fields here</div>
<div class="b" style="left:1299.5px;top:702px;width:150px;height:30px;background:#222222;"></div>
<div class="t" style="left:1310.3px;top:712.0px;font-size:12px;line-height:16px;color:#ffffff;font-weight:bold;letter-spacing:-0.27px;">FILTERS</div>
<div class="b" style="left:1299.5px;top:732px;width:150px;height:117px;background:#484848;"></div>
<div class="t" style="left:1309.3px;top:742.0px;font-size:10px;line-height:14px;color:#c8c8c8;letter-spacing:-0.04px;">Visual level filters</div>
<div class="b" style="left:1303px;top:762px;width:140.5px;height:90px;border:1px dashed #6a6a6a;border-radius:3px;"></div>
<div class="b" style="left:1305.2px;top:765.0px;width:136.3px;height:21px;background:#333333;border-radius:3px;"></div>
<div class="t" style="left:1312.3px;top:768.0px;font-size:10px;line-height:14px;color:#ffffff;letter-spacing:0.02px;text-shadow:0 0 0.6px #fff;">Customer Name (All)</div>
<div class="b" style="left:1305.2px;top:789.15px;width:136.3px;height:21px;background:#333333;border-radius:3px;"></div>
<div class="t" style="left:1312.3px;top:793.0px;font-size:10px;line-height:14px;color:#ffffff;letter-spacing:0.15px;text-shadow:0 0 0.6px #fff;">Profit (All)</div>
<div class="b" style="left:1305.2px;top:813.3px;width:136.3px;height:21px;background:#333333;border-radius:3px;"></div>
<div class="t" style="left:1312.3px;top:817.0px;font-size:10px;line-height:14px;color:#ffffff;letter-spacing:0.03px;text-shadow:0 0 0.6px #fff;">Profit measure (All)</div>
<div class="b" style="left:1305.2px;top:837.45px;width:136.3px;height:21px;background:#333333;border-radius:3px;"></div>
<div class="t" style="left:1312.3px;top:841.0px;font-size:10px;line-height:14px;color:#ffffff;letter-spacing:-0.17px;text-shadow:0 0 0.6px #fff;">Sales (All)</div>
<div class="b" style="left:1444.5px;top:290px;width:4.5px;height:425.5px;background:#7c7c7c;border-radius:2.500px;"></div>
<!-- fieldspane -->
<div class="b" style="left:1450px;top:116px;width:150px;height:733px;background:#444444;"></div>
<div class="b" style="left:1449.5px;top:116px;width:150.5px;height:40px;background:#222222;border-top:1.500px solid #000;border-left:1px solid #000;"></div>
<div class="b" style="left:1449px;top:156px;width:1px;height:693px;background:#0c0c0c;"></div>
<div class="t" style="left:1460.0px;top:128.0px;font-size:12px;line-height:16px;color:#ffffff;font-weight:bold;letter-spacing:-0.53px;">FIELDS</div>
<svg class="b" style="left:1581.5px;top:129.5px;" width="9" height="13" viewBox="0 0 9 13"><path d="M1.500 1l5.500 5.500-5.500 5.500" fill="none" stroke="#fff" stroke-width="1.200"/></svg>
<div class="b" style="left:1458px;top:162px;width:134px;height:24.5px;background:#222222;"></div>
<svg class="b" style="left:1467px;top:167px;" width="14" height="14" viewBox="0 0 14 14"><circle cx="8.500" cy="5" r="3.800" fill="none" stroke="#ccc" stroke-width="1.100"/><path d="M5.800 7.800l-4.800 5" stroke="#ccc" stroke-width="1.200"/></svg>
<div class="t" style="left:1488.4px;top:168.0px;font-size:10px;line-height:14px;color:#d0d0d0;letter-spacing:0.07px;">Search</div>
<div class="b" style="left:1450px;top:195px;width:150px;height:1px;background:#555555;"></div>
<svg class="b" style="left:1457px;top:208.5px;" width="6" height="6" viewBox="0 0 6 6"><path d="M5.500 0.500v5h-5z" fill="#9a9a9a"/></svg>
<svg class="b" style="left:1470.5px;top:207px;" width="11" height="10" viewBox="0 0 11 10"><rect x="0.500" y="0.500" width="10" height="9" fill="#fff"/><path d="M0.500 3h10M0.500 5.300h10M0.500 7.500h10M3.800 3v6.500M7.200 3v6.500" stroke="#555" stroke-width="0.700"/></svg>
<div class="t" style="left:1491.7px;top:206.0px;font-size:10px;line-height:14px;color:#f2c811;letter-spacing:-0.04px;">Orders</div>
<div class="b" style="left:1454px;top:225.3px;width:140px;height:17.2px;background:#676767;border-radius:2.500px;box-shadow:0 0 0 0.600px #2f2f2f;"></div><div class="b" style="left:1476px;top:229.0px;width:10px;height:10px;background:#ffffff;border:1px solid #d8d8d8;"></div><div class="t" style="left:1503.0px;top:228.0px;font-size:10px;line-height:14px;color:#ffffff;letter-spacing:0.05px;text-shadow:0 0 0.6px #fff;">Category</div>
<div class="b" style="left:1454px;top:243.6px;width:140px;height:17.2px;background:#676767;border-radius:2.500px;box-shadow:0 0 0 0.600px #2f2f2f;"></div><div class="b" style="left:1476px;top:247.3px;width:10px;height:10px;background:#ffffff;border:1px solid #d8d8d8;"></div><div class="t" style="left:1503.0px;top:246.0px;font-size:10px;line-height:14px;color:#ffffff;letter-spacing:0.07px;text-shadow:0 0 0.6px #fff;">City</div>
<div class="b" style="left:1454px;top:262.0px;width:140px;height:17.2px;background:#676767;border-radius:2.500px;box-shadow:0 0 0 0.600px #2f2f2f;"></div><div class="b" style="left:1476px;top:265.7px;width:10px;height:10px;background:#ffffff;border:1px solid #d8d8d8;"></div><div class="t" style="left:1503.0px;top:264.0px;font-size:10px;line-height:14px;color:#ffffff;letter-spacing:0.14px;text-shadow:0 0 0.6px #fff;">Country</div>
<div class="b" style="left:1454px;top:280.3px;width:140px;height:17.2px;background:#676767;border-radius:2.500px;box-shadow:0 0 0 0.600px #2f2f2f;"></div><div class="b" style="left:1476px;top:284.0px;width:10px;height:10px;background:#ffffff;border:1px solid #d8d8d8;"></div><svg class="b" style="left:1489px;top:284.5px;" width="11" height="10" viewBox="0 0 11 10"><rect x="0.500" y="0.500" width="3" height="3" fill="#f2c811"/><rect x="5.500" y="3.300" width="3" height="3" fill="#f2c811"/><rect x="5.500" y="6.800" width="3" height="3" fill="#f2c811"/><path d="M2 3.500v5h3.500M2 5h3.500" fill="none" stroke="#ddd" stroke-width="0.600" stroke-dasharray="1 0.600"/></svg><svg class="b" style="left:1466px;top:286.0px;" width="6" height="6" viewBox="0 0 6 6"><path d="M5.500 0.500v5h-5z" fill="#b0b0b0"/></svg><div class="t" style="left:1503.0px;top:283.0px;font-size:10px;line-height:14px;color:#ffffff;letter-spacing:-0.05px;text-shadow:0 0 0.6px #fff;">Country Hierar...</div>
<div class="b" style="left:1454px;top:298.6px;width:140px;height:17.2px;background:#676767;border-radius:2.500px;box-shadow:0 0 0 0.600px #2f2f2f;"></div><div class="b" style="left:1482.3px;top:302.3px;width:10px;height:10px;background:#ffffff;border:1px solid #d8d8d8;"></div><div class="t" style="left:1510.0px;top:301.0px;font-size:10px;line-height:14px;color:#ffffff;letter-spacing:0.07px;text-shadow:0 0 0.6px #fff;">Country</div>
<div class="b" style="left:1454px;top:316.9px;width:140px;height:17.2px;background:#676767;border-radius:2.500px;box-shadow:0 0 0 0.600px #2f2f2f;"></div><div class="b" style="left:1482.3px;top:320.6px;width:10px;height:10px;background:#ffffff;border:1px solid #d8d8d8;"></div><div class="t" style="left:1510.0px;top:319.0px;font-size:10px;line-height:14px;color:#ffffff;letter-spacing:-0.17px;text-shadow:0 0 0.6px #fff;">State</div>
<div class="b" style="left:1454px;top:335.3px;width:140px;height:17.2px;background:#676767;border-radius:2.500px;box-shadow:0 0 0 0.600px #2f2f2f;"></div><div class="b" style="left:1482.3px;top:339.0px;width:10px;height:10px;background:#ffffff;border:1px solid #d8d8d8;"></div><div class="t" style="left:1510.0px;top:338.0px;font-size:10px;line-height:14px;color:#ffffff;letter-spacing:-0.06px;text-shadow:0 0 0.6px #fff;">City</div>
<div class="b" style="left:1454px;top:353.6px;width:140px;height:17.2px;background:#676767;border-radius:2.500px;box-shadow:0 0 0 0.600px #2f2f2f;"></div><div class="b" style="left:1476px;top:357.3px;width:10px;height:10px;background:#ffffff;border:1px solid #d8d8d8;"></div><div class="t" style="left:1503.0px;top:356.0px;font-size:10px;line-height:14px;color:#ffffff;letter-spacing:-0.01px;text-shadow:0 0 0.6px #fff;">Customer ID</div>
<div class="b" style="left:1454px;top:371.9px;width:140px;height:17.2px;background:#676767;border-radius:2.500px;box-shadow:0 0 0 0.600px #2f2f2f;"></div><div class="b" style="left:1476px;top:375.6px;width:10px;height:10px;background:#f2c811;"></div><svg class="b" style="left:1476px;top:375.6px;" width="10" height="10" viewBox="0 0 10 10"><path d="M2 5.200l2.200 2.300 3.800-5" fill="none" stroke="#222" stroke-width="1.300"/></svg><div class="t" style="left:1503.0px;top:374.0px;font-size:10px;line-height:14px;color:#ffffff;letter-spacing:-0.02px;text-shadow:0 0 0.6px #fff;">Customer Name</div>
<div class="b" style="left:1454px;top:390.3px;width:140px;height:17.2px;background:#676767;border-radius:2.500px;box-shadow:0 0 0 0.600px #2f2f2f;"></div><div class="b" style="left:1476px;top:394.0px;width:10px;height:10px;background:#ffffff;border:1px solid #d8d8d8;"></div><div class="t" style="left:1489.6px;top:392.0px;font-size:11.5px;line-height:15.5px;color:#b4b4b4;transform:scaleX(1.22);transform-origin:0 50%;">Σ</div><div class="t" style="left:1503.0px;top:393.0px;font-size:10px;line-height:14px;color:#ffffff;letter-spacing:0.07px;text-shadow:0 0 0.6px #fff;">Discount</div>
<div class="b" style="left:1454px;top:408.6px;width:140px;height:17.2px;background:#676767;border-radius:2.500px;box-shadow:0 0 0 0.600px #2f2f2f;"></div><div class="b" style="left:1476px;top:412.3px;width:10px;height:10px;background:#ffffff;border:1px solid #d8d8d8;"></div><div class="t" style="left:1503.0px;top:411.0px;font-size:10px;line-height:14px;color:#ffffff;letter-spacing:0.00px;text-shadow:0 0 0.6px #fff;">Order Date</div>
<div class="b" style="left:1454px;top:426.9px;width:140px;height:17.2px;background:#676767;border-radius:2.500px;box-shadow:0 0 0 0.600px #2f2f2f;"></div><div class="b" style="left:1476px;top:430.6px;width:10px;height:10px;background:#ffffff;border:1px solid #d8d8d8;"></div><div class="t" style="left:1503.0px;top:429.0px;font-size:10px;line-height:14px;color:#ffffff;letter-spacing:0.08px;text-shadow:0 0 0.6px #fff;">Order ID</div>
<div class="b" style="left:1454px;top:445.3px;width:140px;height:17.2px;background:#676767;border-radius:2.500px;box-shadow:0 0 0 0.600px #2f2f2f;"></div><div class="b" style="left:1476px;top:449.0px;width:10px;height:10px;background:#ffffff;border:1px solid #d8d8d8;"></div><div class="t" style="left:1489.6px;top:447.0px;font-size:11.5px;line-height:15.5px;color:#b4b4b4;transform:scaleX(1.22);transform-origin:0 50%;">Σ</div><div class="t" style="left:1503.0px;top:448.0px;font-size:10px;line-height:14px;color:#ffffff;letter-spacing:-0.18px;text-shadow:0 0 0.6px #fff;">Postal Code</div>
<div class="b" style="left:1454px;top:463.6px;width:140px;height:17.2px;background:#676767;border-radius:2.500px;box-shadow:0 0 0 0.600px #2f2f2f;"></div><div class="b" style="left:1476px;top:467.3px;width:10px;height:10px;background:#ffffff;border:1px solid #d8d8d8;"></div><div class="t" style="left:1503.0px;top:466.0px;font-size:10px;line-height:14px;color:#ffffff;letter-spacing:0.03px;text-shadow:0 0 0.6px #fff;">Product ID</div>
<div class="b" style="left:1454px;top:481.9px;width:140px;height:17.2px;background:#676767;border-radius:2.500px;box-shadow:0 0 0 0.600px #2f2f2f;"></div><div class="b" style="left:1476px;top:485.6px;width:10px;height:10px;background:#ffffff;border:1px solid #d8d8d8;"></div><div class="t" style="left:1503.0px;top:484.0px;font-size:10px;line-height:14px;color:#ffffff;letter-spacing:0.01px;text-shadow:0 0 0.6px #fff;">Product Name</div>
<div class="b" style="left:1454px;top:500.2px;width:140px;height:17.2px;background:#676767;border-radius:2.500px;box-shadow:0 0 0 0.600px #2f2f2f;"></div><div class="b" style="left:1476px;top:503.9px;width:10px;height:10px;background:#f2c811;"></div><svg class="b" style="left:1476px;top:503.9px;" width="10" height="10" viewBox="0 0 10 10"><path d="M2 5.200l2.200 2.300 3.800-5" fill="none" stroke="#222" stroke-width="1.300"/></svg><div class="t" style="left:1489.6px;top:502.0px;font-size:11.5px;line-height:15.5px;color:#b4b4b4;transform:scaleX(1.22);transform-origin:0 50%;">Σ</div><div class="t" style="left:1503.0px;top:503.0px;font-size:10px;line-height:14px;color:#ffffff;letter-spacing:0.28px;text-shadow:0 0 0.6px #fff;">Profit</div>
<div class="b" style="left:1454px;top:518.6px;width:140px;height:17.2px;background:#676767;border-radius:2.500px;box-shadow:0 0 0 0.600px #2f2f2f;"></div><div class="b" style="left:1476px;top:522.3px;width:10px;height:10px;background:#f2c811;"></div><svg class="b" style="left:1476px;top:522.3px;" width="10" height="10" viewBox="0 0 10 10"><path d="M2 5.200l2.200 2.300 3.800-5" fill="none" stroke="#222" stroke-width="1.300"/></svg><svg class="b" style="left:1490px;top:522.8px;" width="8" height="9" viewBox="0 0 8 9"><rect x="0.500" y="0.500" width="6.500" height="8" fill="#d6d6d6"/><rect x="1.500" y="1.500" width="4.500" height="1.500" fill="#555"/><path d="M1.500 4.500h4.500M1.500 6.300h4.500M3 3.800v4M4.700 3.800v4" stroke="#555" stroke-width="0.600"/></svg><div class="t" style="left:1503.0px;top:521.0px;font-size:10px;line-height:14px;color:#ffffff;letter-spacing:-0.00px;text-shadow:0 0 0.6px #fff;">Profit measure</div>
<div class="b" style="left:1454px;top:536.9px;width:140px;height:17.2px;background:#676767;border-radius:2.500px;box-shadow:0 0 0 0.600px #2f2f2f;"></div><div class="b" style="left:1476px;top:540.6px;width:10px;height:10px;background:#ffffff;border:1px solid #d8d8d8;"></div><svg class="b" style="left:1490px;top:541.1px;" width="8" height="9" viewBox="0 0 8 9"><rect x="0.500" y="0.500" width="6.500" height="8" fill="#d6d6d6"/><rect x="1.500" y="1.500" width="4.500" height="1.500" fill="#555"/><path d="M1.500 4.500h4.500M1.500 6.300h4.500M3 3.800v4M4.700 3.800v4" stroke="#555" stroke-width="0.600"/></svg><div class="t" style="left:1503.0px;top:539.0px;font-size:10px;line-height:14px;color:#ffffff;letter-spacing:0.30px;text-shadow:0 0 0.6px #fff;">profit per</div>
<div class="b" style="left:1454px;top:555.2px;width:140px;height:17.2px;background:#676767;border-radius:2.500px;box-shadow:0 0 0 0.600px #2f2f2f;"></div><div class="b" style="left:1476px;top:558.9px;width:10px;height:10px;background:#ffffff;border:1px solid #d8d8d8;"></div><div class="t" style="left:1489.6px;top:557.0px;font-size:11.5px;line-height:15.5px;color:#b4b4b4;transform:scaleX(1.22);transform-origin:0 50%;">Σ</div><div class="t" style="left:1503.0px;top:558.0px;font-size:10px;line-height:14px;color:#ffffff;letter-spacing:0.22px;text-shadow:0 0 0.6px #fff;">Quantity</div>
<div class="b" style="left:1454px;top:573.6px;width:140px;height:17.2px;background:#676767;border-radius:2.500px;box-shadow:0 0 0 0.600px #2f2f2f;"></div><div class="b" style="left:1476px;top:577.3px;width:10px;height:10px;background:#ffffff;border:1px solid #d8d8d8;"></div><div class="t" style="left:1503.0px;top:576.0px;font-size:10px;line-height:14px;color:#ffffff;letter-spacing:-0.03px;text-shadow:0 0 0.6px #fff;">Region</div>
<div class="b" style="left:1454px;top:591.9px;width:140px;height:17.2px;background:#676767;border-radius:2.500px;box-shadow:0 0 0 0.600px #2f2f2f;"></div><div class="b" style="left:1476px;top:595.6px;width:10px;height:10px;background:#ffffff;border:1px solid #d8d8d8;"></div><div class="t" style="left:1489.6px;top:594.0px;font-size:11.5px;line-height:15.5px;color:#b4b4b4;transform:scaleX(1.22);transform-origin:0 50%;">Σ</div><div class="t" style="left:1503.0px;top:594.0px;font-size:10px;line-height:14px;color:#ffffff;letter-spacing:-0.13px;text-shadow:0 0 0.6px #fff;">Row ID</div>
<div class="b" style="left:1454px;top:610.2px;width:140px;height:17.2px;background:#676767;border-radius:2.500px;box-shadow:0 0 0 0.600px #2f2f2f;"></div><div class="b" style="left:1476px;top:613.9px;width:10px;height:10px;background:#f2c811;"></div><svg class="b" style="left:1476px;top:613.9px;" width="10" height="10" viewBox="0 0 10 10"><path d="M2 5.200l2.200 2.300 3.800-5" fill="none" stroke="#222" stroke-width="1.300"/></svg><div class="t" style="left:1489.6px;top:612.0px;font-size:11.5px;line-height:15.5px;color:#b4b4b4;transform:scaleX(1.22);transform-origin:0 50%;">Σ</div><div class="t" style="left:1503.0px;top:613.0px;font-size:10px;line-height:14px;color:#ffffff;letter-spacing:-0.40px;text-shadow:0 0 0.6px #fff;">Sales</div>
<div class="b" style="left:1454px;top:628.6px;width:140px;height:17.2px;background:#676767;border-radius:2.500px;box-shadow:0 0 0 0.600px #2f2f2f;"></div><div class="b" style="left:1476px;top:632.3px;width:10px;height:10px;background:#ffffff;border:1px solid #d8d8d8;"></div><div class="t" style="left:1503.0px;top:631.0px;font-size:10px;line-height:14px;color:#ffffff;letter-spacing:-0.00px;text-shadow:0 0 0.6px #fff;">Segment</div>
<div class="b" style="left:1454px;top:646.9px;width:140px;height:17.2px;background:#676767;border-radius:2.500px;box-shadow:0 0 0 0.600px #2f2f2f;"></div><div class="b" style="left:1476px;top:650.6px;width:10px;height:10px;background:#ffffff;border:1px solid #d8d8d8;"></div><div class="t" style="left:1503.0px;top:649.0px;font-size:10px;line-height:14px;color:#ffffff;letter-spacing:-0.05px;text-shadow:0 0 0.6px #fff;">Ship Date</div>
<div class="b" style="left:1454px;top:665.2px;width:140px;height:17.2px;background:#676767;border-radius:2.500px;box-shadow:0 0 0 0.600px #2f2f2f;"></div><div class="b" style="left:1476px;top:668.9px;width:10px;height:10px;background:#ffffff;border:1px solid #d8d8d8;"></div><div class="t" style="left:1503.0px;top:668.0px;font-size:10px;line-height:14px;color:#ffffff;letter-spacing:0.08px;text-shadow:0 0 0.6px #fff;">Ship Mode</div>
<div class="b" style="left:1454px;top:683.5px;width:140px;height:17.2px;background:#676767;border-radius:2.500px;box-shadow:0 0 0 0.600px #2f2f2f;"></div><div class="b" style="left:1476px;top:687.2px;width:10px;height:10px;background:#ffffff;border:1px solid #d8d8d8;"></div><div class="t" style="left:1503.0px;top:686.0px;font-size:10px;line-height:14px;color:#ffffff;letter-spacing:-0.17px;text-shadow:0 0 0.6px #fff;">State</div>
<div class="b" style="left:1454px;top:701.9px;width:140px;height:17.2px;background:#676767;border-radius:2.500px;box-shadow:0 0 0 0.600px #2f2f2f;"></div><div class="b" style="left:1476px;top:705.6px;width:10px;height:10px;background:#ffffff;border:1px solid #d8d8d8;"></div><div class="t" style="left:1503.0px;top:704.0px;font-size:10px;line-height:14px;color:#ffffff;letter-spacing:0.03px;text-shadow:0 0 0.6px #fff;">Sub-Category</div>
<svg class="b" style="left:1458.5px;top:729px;" width="6" height="8" viewBox="0 0 6 8"><path d="M0.500 0.500l4.500 3.500-4.500 3.500z" fill="#9a9a9a"/></svg>
<svg class="b" style="left:1470.5px;top:728px;" width="11" height="10" viewBox="0 0 11 10"><rect x="0.500" y="0.500" width="10" height="9" fill="#fff"/><path d="M0.500 3h10M0.500 5.300h10M0.500 7.500h10M3.800 3v6.500M7.200 3v6.500" stroke="#555" stroke-width="0.700"/></svg>
<div class="t" style="left:1491.7px;top:727.0px;font-size:10px;line-height:14px;color:#ffffff;letter-spacing:-0.22px;text-shadow:0 0 0.6px #fff;">People</div>
<svg class="b" style="left:1458.5px;top:749px;" width="6" height="8" viewBox="0 0 6 8"><path d="M0.500 0.500l4.500 3.500-4.500 3.500z" fill="#9a9a9a"/></svg>
<svg class="b" style="left:1470.5px;top:748px;" width="11" height="10" viewBox="0 0 11 10"><rect x="0.500" y="0.500" width="10" height="9" fill="#fff"/><path d="M0.500 3h10M0.500 5.300h10M0.500 7.500h10M3.800 3v6.500M7.200 3v6.500" stroke="#555" stroke-width="0.700"/></svg>
<div class="t" style="left:1491.7px;top:747.0px;font-size:10px;line-height:14px;color:#ffffff;letter-spacing:-0.10px;text-shadow:0 0 0.6px #fff;">Returned</div>
<!-- status -->
<div class="b" style="left:0px;top:848.5px;width:1600px;height:18.5px;background:#333333;"></div>
<div class="t" style="left:4.0px;top:852.0px;font-size:9px;line-height:13px;color:#fff;letter-spacing:-0.30px;text-shadow:0 0 0.5px #fff;">PAGE 2 OF 2</div>
<div class="t" style="left:1415.0px;top:852.0px;font-size:9px;line-height:13px;color:#fff;letter-spacing:-0.26px;text-shadow:0 0 0.5px #fff;">UPDATE AVAILABLE (CLICK TO DOWNLOAD)</div>
</body></html>
